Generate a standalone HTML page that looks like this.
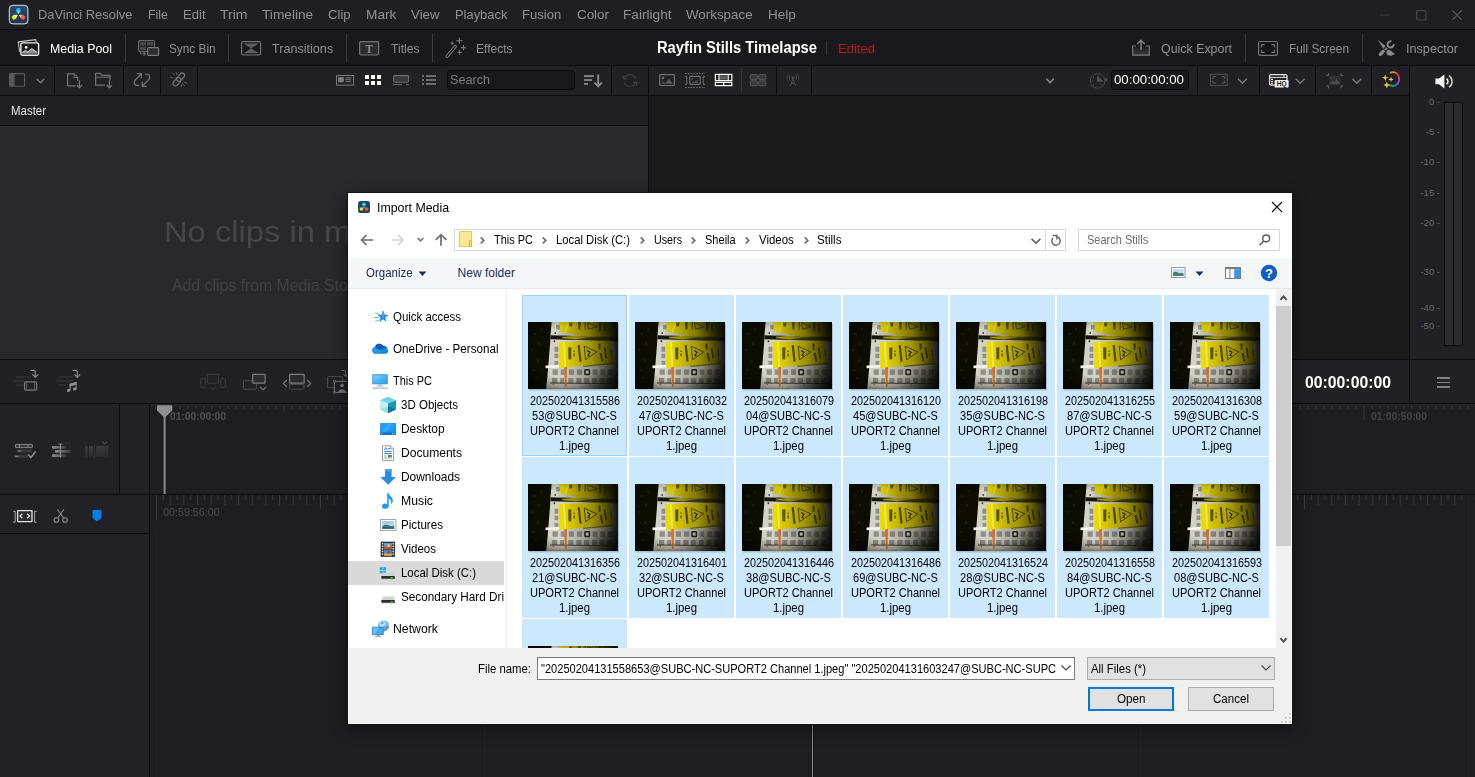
<!DOCTYPE html>
<html><head><meta charset="utf-8"><title>DaVinci Resolve</title>
<style>
html,body{margin:0;padding:0;background:#1e1e22;}
body{width:1475px;height:777px;position:relative;overflow:hidden;font-family:"Liberation Sans",sans-serif;}
div,span,svg{position:absolute;display:block;}
span{white-space:nowrap;}
</style></head><body>
<div style="left:0px;top:0px;width:1475px;height:29px;background:#1f1f23;"></div>
<div style="left:0px;top:29px;width:1475px;height:1px;background:#0d0d0f;"></div>
<div style="left:0px;top:30px;width:1475px;height:35px;background:#19191d;"></div>
<div style="left:0px;top:65px;width:1475px;height:1px;background:#0d0d0f;"></div>
<div style="left:0px;top:66px;width:1475px;height:29px;background:#212125;"></div>
<div style="left:0px;top:95px;width:1409px;height:1px;background:#0d0d0f;"></div>
<div style="left:0px;top:96px;width:648px;height:29px;background:#212125;"></div>
<div style="left:0px;top:125px;width:648px;height:1px;background:#0d0d0f;"></div>
<div style="left:0px;top:126px;width:648px;height:233px;background:#28282d;"></div>
<div style="left:648px;top:66px;width:1px;height:294px;background:#0d0d0f;"></div>
<div style="left:649px;top:96px;width:760px;height:263px;background:#1b1b1c;"></div>
<div style="left:1409px;top:66px;width:1px;height:338px;background:#0d0d0f;"></div>
<div style="left:1410px;top:66px;width:65px;height:293px;background:#212125;"></div>
<div style="left:0px;top:359px;width:1475px;height:1px;background:#0d0d0f;"></div>
<div style="left:0px;top:360px;width:1475px;height:43px;background:#212125;"></div>
<div style="left:0px;top:403px;width:1475px;height:1px;background:#0d0d0f;"></div>
<div style="left:0px;top:404px;width:1475px;height:90px;background:#1e1e22;"></div>
<div style="left:0px;top:404px;width:149px;height:90px;background:#222226;"></div>
<div style="left:119px;top:404px;width:1px;height:90px;background:#0d0d0f;"></div>
<div style="left:149px;top:404px;width:1px;height:373px;background:#0d0d0f;"></div>
<div style="left:0px;top:494px;width:1475px;height:1px;background:#0d0d0f;"></div>
<div style="left:0px;top:495px;width:149px;height:282px;background:#222226;"></div>
<div style="left:150px;top:495px;width:1325px;height:282px;background:#1e1e22;"></div>
<div style="left:0px;top:533px;width:149px;height:1px;background:#0d0d0f;"></div>
<div style="left:54px;top:66px;width:1px;height:29px;background:#0d0d0f;"></div>
<div style="left:123px;top:66px;width:1px;height:29px;background:#0d0d0f;"></div>
<div style="left:160px;top:66px;width:1px;height:29px;background:#0d0d0f;"></div>
<div style="left:197px;top:66px;width:1px;height:29px;background:#0d0d0f;"></div>
<div style="left:611px;top:66px;width:1px;height:29px;background:#0d0d0f;"></div>
<div style="left:776px;top:66px;width:1px;height:29px;background:#0d0d0f;"></div>
<div style="left:811px;top:66px;width:1px;height:29px;background:#0d0d0f;"></div>
<div style="left:1197px;top:66px;width:1px;height:29px;background:#0d0d0f;"></div>
<div style="left:1259px;top:66px;width:1px;height:29px;background:#0d0d0f;"></div>
<div style="left:1315px;top:66px;width:1px;height:29px;background:#0d0d0f;"></div>
<div style="left:1371px;top:66px;width:1px;height:29px;background:#0d0d0f;"></div>
<div style="left:741px;top:69px;width:1px;height:23px;background:#3a3a3e;"></div>
<span id="t1" style="left:38.4px;top:6.7px;font:400 13px/16px 'Liberation Sans',sans-serif;color:#929292;transform:scaleX(0.9922);transform-origin:0 0;">DaVinci Resolve</span>
<span id="t2" style="left:147.6px;top:6.7px;font:400 13px/16px 'Liberation Sans',sans-serif;color:#929292;transform:scaleX(0.9545);transform-origin:0 0;">File</span>
<span id="t3" style="left:183px;top:6.7px;font:400 13px/16px 'Liberation Sans',sans-serif;color:#929292;transform:scaleX(1.0086);transform-origin:0 0;">Edit</span>
<span id="t4" style="left:220px;top:6.7px;font:400 13px/16px 'Liberation Sans',sans-serif;color:#929292;transform:scaleX(1.0817);transform-origin:0 0;">Trim</span>
<span id="t5" style="left:262.4px;top:6.7px;font:400 13px/16px 'Liberation Sans',sans-serif;color:#929292;transform:scaleX(1.0523);transform-origin:0 0;">Timeline</span>
<span id="t6" style="left:328px;top:6.7px;font:400 13px/16px 'Liberation Sans',sans-serif;color:#929292;transform:scaleX(1.0086);transform-origin:0 0;">Clip</span>
<span id="t7" style="left:366px;top:6.7px;font:400 13px/16px 'Liberation Sans',sans-serif;color:#929292;transform:scaleX(1.0522);transform-origin:0 0;">Mark</span>
<span id="t8" style="left:411px;top:6.7px;font:400 13px/16px 'Liberation Sans',sans-serif;color:#929292;transform:scaleX(1.0231);transform-origin:0 0;">View</span>
<span id="t9" style="left:455px;top:6.7px;font:400 13px/16px 'Liberation Sans',sans-serif;color:#929292;transform:scaleX(0.9934);transform-origin:0 0;">Playback</span>
<span id="t10" style="left:522.4px;top:6.7px;font:400 13px/16px 'Liberation Sans',sans-serif;color:#929292;transform:scaleX(1.0043);transform-origin:0 0;">Fusion</span>
<span id="t11" style="left:576.6px;top:6.7px;font:400 13px/16px 'Liberation Sans',sans-serif;color:#929292;transform:scaleX(1.0297);transform-origin:0 0;">Color</span>
<span id="t12" style="left:623.4px;top:6.7px;font:400 13px/16px 'Liberation Sans',sans-serif;color:#929292;transform:scaleX(1.0508);transform-origin:0 0;">Fairlight</span>
<span id="t13" style="left:686px;top:6.7px;font:400 13px/16px 'Liberation Sans',sans-serif;color:#929292;transform:scaleX(1.0278);transform-origin:0 0;">Workspace</span>
<span id="t14" style="left:767.6px;top:6.7px;font:400 13px/16px 'Liberation Sans',sans-serif;color:#929292;transform:scaleX(1.0393);transform-origin:0 0;">Help</span>
<span id="t15" style="left:50.4px;top:40.8px;font:400 13px/16px 'Liberation Sans',sans-serif;color:#ffffff;transform:scaleX(0.9532);transform-origin:0 0;">Media Pool</span>
<span id="t16" style="left:169px;top:40.8px;font:400 13px/16px 'Liberation Sans',sans-serif;color:#929292;transform:scaleX(0.9082);transform-origin:0 0;">Sync Bin</span>
<span id="t17" style="left:272.4px;top:40.8px;font:400 13px/16px 'Liberation Sans',sans-serif;color:#929292;transform:scaleX(0.9697);transform-origin:0 0;">Transitions</span>
<span id="t18" style="left:390.6px;top:40.8px;font:400 13px/16px 'Liberation Sans',sans-serif;color:#929292;transform:scaleX(0.9353);transform-origin:0 0;">Titles</span>
<span id="t19" style="left:476.4px;top:40.8px;font:400 13px/16px 'Liberation Sans',sans-serif;color:#929292;transform:scaleX(0.9262);transform-origin:0 0;">Effects</span>
<span id="t20" style="left:656.6px;top:37.96px;font:700 16px/19px 'Liberation Sans',sans-serif;color:#ffffff;transform:scaleX(0.9195);transform-origin:0 0;">Rayfin Stills Timelapse</span>
<div style="left:826px;top:41px;width:1px;height:14px;background:#3a3a3e;"></div>
<span id="t21" style="left:838px;top:40.8px;font:400 13px/16px 'Liberation Sans',sans-serif;color:#b11a1a;transform:scaleX(1.0034);transform-origin:0 0;">Edited</span>
<span id="t22" style="left:1161.4px;top:40.8px;font:400 13px/16px 'Liberation Sans',sans-serif;color:#929292;transform:scaleX(0.9540);transform-origin:0 0;">Quick Export</span>
<span id="t23" style="left:1289.4px;top:40.8px;font:400 13px/16px 'Liberation Sans',sans-serif;color:#929292;transform:scaleX(0.9125);transform-origin:0 0;">Full Screen</span>
<span id="t24" style="left:1406.4px;top:40.8px;font:400 13px/16px 'Liberation Sans',sans-serif;color:#929292;transform:scaleX(0.9722);transform-origin:0 0;">Inspector</span>
<div style="left:125px;top:34px;width:1px;height:28px;background:#3a3a3e;"></div>
<div style="left:228px;top:34px;width:1px;height:28px;background:#3a3a3e;"></div>
<div style="left:346px;top:34px;width:1px;height:28px;background:#3a3a3e;"></div>
<div style="left:432px;top:34px;width:1px;height:28px;background:#3a3a3e;"></div>
<div style="left:1245px;top:34px;width:1px;height:28px;background:#3a3a3e;"></div>
<div style="left:1362px;top:34px;width:1px;height:28px;background:#3a3a3e;"></div>
<div style="left:447px;top:70px;width:126px;height:18px;background:#18181b;border:1px solid #0b0b0d;border-radius:3px"></div>
<span id="t25" style="left:450.4px;top:72.3px;font:400 13px/16px 'Liberation Sans',sans-serif;color:#7c7c7c;transform:scaleX(0.9708);transform-origin:0 0;">Search</span>
<div style="left:1111px;top:70px;width:76px;height:18px;background:#18181b;border:1px solid #0b0b0d;border-radius:3px"></div>
<span id="t26" style="left:1114.4px;top:72.3px;font:400 13px/16px 'Liberation Sans',sans-serif;color:#ffffff;transform:scaleX(1.0191);transform-origin:0 0;">00:00:00:00</span>
<span id="t27" style="left:11.4px;top:103.84px;font:400 12px/14px 'Liberation Sans',sans-serif;color:#e6e6e6;transform:scaleX(0.9540);transform-origin:0 0;">Master</span>
<span id="t28" style="left:164px;top:213.6px;font:400 30px/36px 'Liberation Sans',sans-serif;color:#45454b;transform:scaleX(1.0903);transform-origin:0 0;">No clips in media pool</span>
<span id="t29" style="left:172px;top:275.66px;font:400 16px/19px 'Liberation Sans',sans-serif;color:#404046;transform:scaleX(0.9879);transform-origin:0 0;">Add clips from Media Storage to get started</span>
<span style="left:1400px;top:96px;width:40px;text-align:right;font:9.5px/12px 'Liberation Sans',sans-serif;color:#66666c">0 -</span>
<span style="left:1400px;top:126px;width:40px;text-align:right;font:9.5px/12px 'Liberation Sans',sans-serif;color:#66666c">-5 -</span>
<span style="left:1400px;top:156px;width:40px;text-align:right;font:9.5px/12px 'Liberation Sans',sans-serif;color:#66666c">-10 -</span>
<span style="left:1400px;top:187px;width:40px;text-align:right;font:9.5px/12px 'Liberation Sans',sans-serif;color:#66666c">-15 -</span>
<span style="left:1400px;top:217px;width:40px;text-align:right;font:9.5px/12px 'Liberation Sans',sans-serif;color:#66666c">-20 -</span>
<span style="left:1400px;top:266px;width:40px;text-align:right;font:9.5px/12px 'Liberation Sans',sans-serif;color:#66666c">-30 -</span>
<span style="left:1400px;top:302px;width:40px;text-align:right;font:9.5px/12px 'Liberation Sans',sans-serif;color:#66666c">-40 -</span>
<span style="left:1400px;top:320px;width:40px;text-align:right;font:9.5px/12px 'Liberation Sans',sans-serif;color:#66666c">-50 -</span>
<div style="left:1444px;top:102px;width:8px;height:242px;background:#2a2a2f;border:1px solid #0e0e10"></div>
<div style="left:1453px;top:102px;width:8px;height:242px;background:#2a2a2f;border:1px solid #0e0e10"></div>
<span id="t30" style="left:1305px;top:372.71px;font:700 17px/20px 'Liberation Sans',sans-serif;color:#ffffff;transform:scaleX(0.9285);transform-origin:0 0;">00:00:00:00</span>
<div style="left:1409px;top:360px;width:1px;height:43px;background:#0d0d0f;"></div>
<div style="left:1437px;top:377px;width:13px;height:1.5px;background:#808080;"></div>
<div style="left:1437px;top:381.5px;width:13px;height:1.5px;background:#808080;"></div>
<div style="left:1437px;top:386px;width:13px;height:1.5px;background:#808080;"></div>
<svg style="left:0;top:404px" width="1475" height="17" fill="#37373c"><rect x="151.5" y="0" width="1" height="2.5"/><rect x="155.5" y="0" width="1" height="5"/><rect x="159.5" y="0" width="1" height="2.5"/><rect x="163.5" y="0" width="1" height="16"/><rect x="167.5" y="0" width="1" height="2.5"/><rect x="171.5" y="0" width="1" height="5"/><rect x="175.5" y="0" width="1" height="2.5"/><rect x="179.5" y="0" width="1" height="5"/><rect x="183.5" y="0" width="1" height="2.5"/><rect x="187.5" y="0" width="1" height="5"/><rect x="191.5" y="0" width="1" height="2.5"/><rect x="195.5" y="0" width="1" height="5"/><rect x="199.5" y="0" width="1" height="2.5"/><rect x="203.5" y="0" width="1" height="5"/><rect x="207.5" y="0" width="1" height="2.5"/><rect x="211.5" y="0" width="1" height="5"/><rect x="215.5" y="0" width="1" height="2.5"/><rect x="219.5" y="0" width="1" height="5"/><rect x="223.5" y="0" width="1" height="2.5"/><rect x="227.5" y="0" width="1" height="5"/><rect x="231.5" y="0" width="1" height="2.5"/><rect x="235.5" y="0" width="1" height="5"/><rect x="239.5" y="0" width="1" height="2.5"/><rect x="243.5" y="0" width="1" height="5"/><rect x="247.5" y="0" width="1" height="2.5"/><rect x="251.5" y="0" width="1" height="5"/><rect x="255.5" y="0" width="1" height="2.5"/><rect x="259.5" y="0" width="1" height="5"/><rect x="263.5" y="0" width="1" height="2.5"/><rect x="267.5" y="0" width="1" height="5"/><rect x="271.5" y="0" width="1" height="2.5"/><rect x="275.5" y="0" width="1" height="5"/><rect x="279.5" y="0" width="1" height="2.5"/><rect x="283.5" y="0" width="1" height="8.5"/><rect x="287.5" y="0" width="1" height="2.5"/><rect x="291.5" y="0" width="1" height="5"/><rect x="295.5" y="0" width="1" height="2.5"/><rect x="299.5" y="0" width="1" height="5"/><rect x="303.5" y="0" width="1" height="2.5"/><rect x="307.5" y="0" width="1" height="5"/><rect x="311.5" y="0" width="1" height="2.5"/><rect x="315.5" y="0" width="1" height="5"/><rect x="319.5" y="0" width="1" height="2.5"/><rect x="323.5" y="0" width="1" height="5"/><rect x="327.5" y="0" width="1" height="2.5"/><rect x="331.5" y="0" width="1" height="5"/><rect x="335.5" y="0" width="1" height="2.5"/><rect x="339.5" y="0" width="1" height="5"/><rect x="343.5" y="0" width="1" height="2.5"/><rect x="347.5" y="0" width="1" height="5"/><rect x="351.5" y="0" width="1" height="2.5"/><rect x="355.5" y="0" width="1" height="5"/><rect x="359.5" y="0" width="1" height="2.5"/><rect x="363.5" y="0" width="1" height="5"/><rect x="367.5" y="0" width="1" height="2.5"/><rect x="371.5" y="0" width="1" height="5"/><rect x="375.5" y="0" width="1" height="2.5"/><rect x="379.5" y="0" width="1" height="5"/><rect x="383.5" y="0" width="1" height="2.5"/><rect x="387.5" y="0" width="1" height="5"/><rect x="391.5" y="0" width="1" height="2.5"/><rect x="395.5" y="0" width="1" height="5"/><rect x="399.5" y="0" width="1" height="2.5"/><rect x="403.5" y="0" width="1" height="8.5"/><rect x="407.5" y="0" width="1" height="2.5"/><rect x="411.5" y="0" width="1" height="5"/><rect x="415.5" y="0" width="1" height="2.5"/><rect x="419.5" y="0" width="1" height="5"/><rect x="423.5" y="0" width="1" height="2.5"/><rect x="427.5" y="0" width="1" height="5"/><rect x="431.5" y="0" width="1" height="2.5"/><rect x="435.5" y="0" width="1" height="5"/><rect x="439.5" y="0" width="1" height="2.5"/><rect x="443.5" y="0" width="1" height="5"/><rect x="447.5" y="0" width="1" height="2.5"/><rect x="451.5" y="0" width="1" height="5"/><rect x="455.5" y="0" width="1" height="2.5"/><rect x="459.5" y="0" width="1" height="5"/><rect x="463.5" y="0" width="1" height="2.5"/><rect x="467.5" y="0" width="1" height="5"/><rect x="471.5" y="0" width="1" height="2.5"/><rect x="475.5" y="0" width="1" height="5"/><rect x="479.5" y="0" width="1" height="2.5"/><rect x="483.5" y="0" width="1" height="5"/><rect x="487.5" y="0" width="1" height="2.5"/><rect x="491.5" y="0" width="1" height="5"/><rect x="495.5" y="0" width="1" height="2.5"/><rect x="499.5" y="0" width="1" height="5"/><rect x="503.5" y="0" width="1" height="2.5"/><rect x="507.5" y="0" width="1" height="5"/><rect x="511.5" y="0" width="1" height="2.5"/><rect x="515.5" y="0" width="1" height="5"/><rect x="519.5" y="0" width="1" height="2.5"/><rect x="523.5" y="0" width="1" height="8.5"/><rect x="527.5" y="0" width="1" height="2.5"/><rect x="531.5" y="0" width="1" height="5"/><rect x="535.5" y="0" width="1" height="2.5"/><rect x="539.5" y="0" width="1" height="5"/><rect x="543.5" y="0" width="1" height="2.5"/><rect x="547.5" y="0" width="1" height="5"/><rect x="551.5" y="0" width="1" height="2.5"/><rect x="555.5" y="0" width="1" height="5"/><rect x="559.5" y="0" width="1" height="2.5"/><rect x="563.5" y="0" width="1" height="5"/><rect x="567.5" y="0" width="1" height="2.5"/><rect x="571.5" y="0" width="1" height="5"/><rect x="575.5" y="0" width="1" height="2.5"/><rect x="579.5" y="0" width="1" height="5"/><rect x="583.5" y="0" width="1" height="2.5"/><rect x="587.5" y="0" width="1" height="5"/><rect x="591.5" y="0" width="1" height="2.5"/><rect x="595.5" y="0" width="1" height="5"/><rect x="599.5" y="0" width="1" height="2.5"/><rect x="603.5" y="0" width="1" height="5"/><rect x="607.5" y="0" width="1" height="2.5"/><rect x="611.5" y="0" width="1" height="5"/><rect x="615.5" y="0" width="1" height="2.5"/><rect x="619.5" y="0" width="1" height="5"/><rect x="623.5" y="0" width="1" height="2.5"/><rect x="627.5" y="0" width="1" height="5"/><rect x="631.5" y="0" width="1" height="2.5"/><rect x="635.5" y="0" width="1" height="5"/><rect x="639.5" y="0" width="1" height="2.5"/><rect x="643.5" y="0" width="1" height="8.5"/><rect x="647.5" y="0" width="1" height="2.5"/><rect x="651.5" y="0" width="1" height="5"/><rect x="655.5" y="0" width="1" height="2.5"/><rect x="659.5" y="0" width="1" height="5"/><rect x="663.5" y="0" width="1" height="2.5"/><rect x="667.5" y="0" width="1" height="5"/><rect x="671.5" y="0" width="1" height="2.5"/><rect x="675.5" y="0" width="1" height="5"/><rect x="679.5" y="0" width="1" height="2.5"/><rect x="683.5" y="0" width="1" height="5"/><rect x="687.5" y="0" width="1" height="2.5"/><rect x="691.5" y="0" width="1" height="5"/><rect x="695.5" y="0" width="1" height="2.5"/><rect x="699.5" y="0" width="1" height="5"/><rect x="703.5" y="0" width="1" height="2.5"/><rect x="707.5" y="0" width="1" height="5"/><rect x="711.5" y="0" width="1" height="2.5"/><rect x="715.5" y="0" width="1" height="5"/><rect x="719.5" y="0" width="1" height="2.5"/><rect x="723.5" y="0" width="1" height="5"/><rect x="727.5" y="0" width="1" height="2.5"/><rect x="731.5" y="0" width="1" height="5"/><rect x="735.5" y="0" width="1" height="2.5"/><rect x="739.5" y="0" width="1" height="5"/><rect x="743.5" y="0" width="1" height="2.5"/><rect x="747.5" y="0" width="1" height="5"/><rect x="751.5" y="0" width="1" height="2.5"/><rect x="755.5" y="0" width="1" height="5"/><rect x="759.5" y="0" width="1" height="2.5"/><rect x="763.5" y="0" width="1" height="8.5"/><rect x="767.5" y="0" width="1" height="2.5"/><rect x="771.5" y="0" width="1" height="5"/><rect x="775.5" y="0" width="1" height="2.5"/><rect x="779.5" y="0" width="1" height="5"/><rect x="783.5" y="0" width="1" height="2.5"/><rect x="787.5" y="0" width="1" height="5"/><rect x="791.5" y="0" width="1" height="2.5"/><rect x="795.5" y="0" width="1" height="5"/><rect x="799.5" y="0" width="1" height="2.5"/><rect x="803.5" y="0" width="1" height="5"/><rect x="807.5" y="0" width="1" height="2.5"/><rect x="811.5" y="0" width="1" height="5"/><rect x="815.5" y="0" width="1" height="2.5"/><rect x="819.5" y="0" width="1" height="5"/><rect x="823.5" y="0" width="1" height="2.5"/><rect x="827.5" y="0" width="1" height="5"/><rect x="831.5" y="0" width="1" height="2.5"/><rect x="835.5" y="0" width="1" height="5"/><rect x="839.5" y="0" width="1" height="2.5"/><rect x="843.5" y="0" width="1" height="5"/><rect x="847.5" y="0" width="1" height="2.5"/><rect x="851.5" y="0" width="1" height="5"/><rect x="855.5" y="0" width="1" height="2.5"/><rect x="859.5" y="0" width="1" height="5"/><rect x="863.5" y="0" width="1" height="2.5"/><rect x="867.5" y="0" width="1" height="5"/><rect x="871.5" y="0" width="1" height="2.5"/><rect x="875.5" y="0" width="1" height="5"/><rect x="879.5" y="0" width="1" height="2.5"/><rect x="883.5" y="0" width="1" height="8.5"/><rect x="887.5" y="0" width="1" height="2.5"/><rect x="891.5" y="0" width="1" height="5"/><rect x="895.5" y="0" width="1" height="2.5"/><rect x="899.5" y="0" width="1" height="5"/><rect x="903.5" y="0" width="1" height="2.5"/><rect x="907.5" y="0" width="1" height="5"/><rect x="911.5" y="0" width="1" height="2.5"/><rect x="915.5" y="0" width="1" height="5"/><rect x="919.5" y="0" width="1" height="2.5"/><rect x="923.5" y="0" width="1" height="5"/><rect x="927.5" y="0" width="1" height="2.5"/><rect x="931.5" y="0" width="1" height="5"/><rect x="935.5" y="0" width="1" height="2.5"/><rect x="939.5" y="0" width="1" height="5"/><rect x="943.5" y="0" width="1" height="2.5"/><rect x="947.5" y="0" width="1" height="5"/><rect x="951.5" y="0" width="1" height="2.5"/><rect x="955.5" y="0" width="1" height="5"/><rect x="959.5" y="0" width="1" height="2.5"/><rect x="963.5" y="0" width="1" height="5"/><rect x="967.5" y="0" width="1" height="2.5"/><rect x="971.5" y="0" width="1" height="5"/><rect x="975.5" y="0" width="1" height="2.5"/><rect x="979.5" y="0" width="1" height="5"/><rect x="983.5" y="0" width="1" height="2.5"/><rect x="987.5" y="0" width="1" height="5"/><rect x="991.5" y="0" width="1" height="2.5"/><rect x="995.5" y="0" width="1" height="5"/><rect x="999.5" y="0" width="1" height="2.5"/><rect x="1003.5" y="0" width="1" height="8.5"/><rect x="1007.5" y="0" width="1" height="2.5"/><rect x="1011.5" y="0" width="1" height="5"/><rect x="1015.5" y="0" width="1" height="2.5"/><rect x="1019.5" y="0" width="1" height="5"/><rect x="1023.5" y="0" width="1" height="2.5"/><rect x="1027.5" y="0" width="1" height="5"/><rect x="1031.5" y="0" width="1" height="2.5"/><rect x="1035.5" y="0" width="1" height="5"/><rect x="1039.5" y="0" width="1" height="2.5"/><rect x="1043.5" y="0" width="1" height="5"/><rect x="1047.5" y="0" width="1" height="2.5"/><rect x="1051.5" y="0" width="1" height="5"/><rect x="1055.5" y="0" width="1" height="2.5"/><rect x="1059.5" y="0" width="1" height="5"/><rect x="1063.5" y="0" width="1" height="2.5"/><rect x="1067.5" y="0" width="1" height="5"/><rect x="1071.5" y="0" width="1" height="2.5"/><rect x="1075.5" y="0" width="1" height="5"/><rect x="1079.5" y="0" width="1" height="2.5"/><rect x="1083.5" y="0" width="1" height="5"/><rect x="1087.5" y="0" width="1" height="2.5"/><rect x="1091.5" y="0" width="1" height="5"/><rect x="1095.5" y="0" width="1" height="2.5"/><rect x="1099.5" y="0" width="1" height="5"/><rect x="1103.5" y="0" width="1" height="2.5"/><rect x="1107.5" y="0" width="1" height="5"/><rect x="1111.5" y="0" width="1" height="2.5"/><rect x="1115.5" y="0" width="1" height="5"/><rect x="1119.5" y="0" width="1" height="2.5"/><rect x="1123.5" y="0" width="1" height="8.5"/><rect x="1127.5" y="0" width="1" height="2.5"/><rect x="1131.5" y="0" width="1" height="5"/><rect x="1135.5" y="0" width="1" height="2.5"/><rect x="1139.5" y="0" width="1" height="5"/><rect x="1143.5" y="0" width="1" height="2.5"/><rect x="1147.5" y="0" width="1" height="5"/><rect x="1151.5" y="0" width="1" height="2.5"/><rect x="1155.5" y="0" width="1" height="5"/><rect x="1159.5" y="0" width="1" height="2.5"/><rect x="1163.5" y="0" width="1" height="5"/><rect x="1167.5" y="0" width="1" height="2.5"/><rect x="1171.5" y="0" width="1" height="5"/><rect x="1175.5" y="0" width="1" height="2.5"/><rect x="1179.5" y="0" width="1" height="5"/><rect x="1183.5" y="0" width="1" height="2.5"/><rect x="1187.5" y="0" width="1" height="5"/><rect x="1191.5" y="0" width="1" height="2.5"/><rect x="1195.5" y="0" width="1" height="5"/><rect x="1199.5" y="0" width="1" height="2.5"/><rect x="1203.5" y="0" width="1" height="5"/><rect x="1207.5" y="0" width="1" height="2.5"/><rect x="1211.5" y="0" width="1" height="5"/><rect x="1215.5" y="0" width="1" height="2.5"/><rect x="1219.5" y="0" width="1" height="5"/><rect x="1223.5" y="0" width="1" height="2.5"/><rect x="1227.5" y="0" width="1" height="5"/><rect x="1231.5" y="0" width="1" height="2.5"/><rect x="1235.5" y="0" width="1" height="5"/><rect x="1239.5" y="0" width="1" height="2.5"/><rect x="1243.5" y="0" width="1" height="8.5"/><rect x="1247.5" y="0" width="1" height="2.5"/><rect x="1251.5" y="0" width="1" height="5"/><rect x="1255.5" y="0" width="1" height="2.5"/><rect x="1259.5" y="0" width="1" height="5"/><rect x="1263.5" y="0" width="1" height="2.5"/><rect x="1267.5" y="0" width="1" height="5"/><rect x="1271.5" y="0" width="1" height="2.5"/><rect x="1275.5" y="0" width="1" height="5"/><rect x="1279.5" y="0" width="1" height="2.5"/><rect x="1283.5" y="0" width="1" height="5"/><rect x="1287.5" y="0" width="1" height="2.5"/><rect x="1291.5" y="0" width="1" height="5"/><rect x="1295.5" y="0" width="1" height="2.5"/><rect x="1299.5" y="0" width="1" height="5"/><rect x="1303.5" y="0" width="1" height="2.5"/><rect x="1307.5" y="0" width="1" height="5"/><rect x="1311.5" y="0" width="1" height="2.5"/><rect x="1315.5" y="0" width="1" height="5"/><rect x="1319.5" y="0" width="1" height="2.5"/><rect x="1323.5" y="0" width="1" height="5"/><rect x="1327.5" y="0" width="1" height="2.5"/><rect x="1331.5" y="0" width="1" height="5"/><rect x="1335.5" y="0" width="1" height="2.5"/><rect x="1339.5" y="0" width="1" height="5"/><rect x="1343.5" y="0" width="1" height="2.5"/><rect x="1347.5" y="0" width="1" height="5"/><rect x="1351.5" y="0" width="1" height="2.5"/><rect x="1355.5" y="0" width="1" height="5"/><rect x="1359.5" y="0" width="1" height="2.5"/><rect x="1363.5" y="0" width="1" height="16"/><rect x="1367.5" y="0" width="1" height="2.5"/><rect x="1371.5" y="0" width="1" height="5"/><rect x="1375.5" y="0" width="1" height="2.5"/><rect x="1379.5" y="0" width="1" height="5"/><rect x="1383.5" y="0" width="1" height="2.5"/><rect x="1387.5" y="0" width="1" height="5"/><rect x="1391.5" y="0" width="1" height="2.5"/><rect x="1395.5" y="0" width="1" height="5"/><rect x="1399.5" y="0" width="1" height="2.5"/><rect x="1403.5" y="0" width="1" height="5"/><rect x="1407.5" y="0" width="1" height="2.5"/><rect x="1411.5" y="0" width="1" height="5"/><rect x="1415.5" y="0" width="1" height="2.5"/><rect x="1419.5" y="0" width="1" height="5"/><rect x="1423.5" y="0" width="1" height="2.5"/><rect x="1427.5" y="0" width="1" height="5"/><rect x="1431.5" y="0" width="1" height="2.5"/><rect x="1435.5" y="0" width="1" height="5"/><rect x="1439.5" y="0" width="1" height="2.5"/><rect x="1443.5" y="0" width="1" height="5"/><rect x="1447.5" y="0" width="1" height="2.5"/><rect x="1451.5" y="0" width="1" height="5"/><rect x="1455.5" y="0" width="1" height="2.5"/><rect x="1459.5" y="0" width="1" height="5"/><rect x="1463.5" y="0" width="1" height="2.5"/><rect x="1467.5" y="0" width="1" height="5"/><rect x="1471.5" y="0" width="1" height="2.5"/></svg>
<svg style="left:0;top:495px" width="1475" height="26" fill="#38383d"><rect x="156.00" y="0" width="1" height="25"/><rect x="162.83" y="0" width="1" height="5"/><rect x="169.67" y="0" width="1" height="10"/><rect x="176.50" y="0" width="1" height="5"/><rect x="183.33" y="0" width="1" height="10"/><rect x="190.17" y="0" width="1" height="5"/><rect x="197.00" y="0" width="1" height="10"/><rect x="203.83" y="0" width="1" height="5"/><rect x="210.67" y="0" width="1" height="10"/><rect x="217.50" y="0" width="1" height="5"/><rect x="224.33" y="0" width="1" height="10"/><rect x="231.17" y="0" width="1" height="5"/><rect x="238.00" y="0" width="1" height="10"/><rect x="244.83" y="0" width="1" height="5"/><rect x="251.67" y="0" width="1" height="10"/><rect x="258.50" y="0" width="1" height="5"/><rect x="265.33" y="0" width="1" height="10"/><rect x="272.17" y="0" width="1" height="5"/><rect x="279.00" y="0" width="1" height="10"/><rect x="285.83" y="0" width="1" height="5"/><rect x="292.67" y="0" width="1" height="10"/><rect x="299.50" y="0" width="1" height="5"/><rect x="306.33" y="0" width="1" height="10"/><rect x="313.17" y="0" width="1" height="5"/><rect x="320.00" y="0" width="1" height="14"/><rect x="326.83" y="0" width="1" height="5"/><rect x="333.67" y="0" width="1" height="10"/><rect x="340.50" y="0" width="1" height="5"/><rect x="347.33" y="0" width="1" height="10"/><rect x="354.17" y="0" width="1" height="5"/><rect x="361.00" y="0" width="1" height="10"/><rect x="367.83" y="0" width="1" height="5"/><rect x="374.67" y="0" width="1" height="10"/><rect x="381.50" y="0" width="1" height="5"/><rect x="388.33" y="0" width="1" height="10"/><rect x="395.17" y="0" width="1" height="5"/><rect x="402.00" y="0" width="1" height="10"/><rect x="408.83" y="0" width="1" height="5"/><rect x="415.67" y="0" width="1" height="10"/><rect x="422.50" y="0" width="1" height="5"/><rect x="429.33" y="0" width="1" height="10"/><rect x="436.17" y="0" width="1" height="5"/><rect x="443.00" y="0" width="1" height="10"/><rect x="449.83" y="0" width="1" height="5"/><rect x="456.67" y="0" width="1" height="10"/><rect x="463.50" y="0" width="1" height="5"/><rect x="470.33" y="0" width="1" height="10"/><rect x="477.17" y="0" width="1" height="5"/><rect x="484.00" y="0" width="1" height="25"/><rect x="490.83" y="0" width="1" height="5"/><rect x="497.67" y="0" width="1" height="10"/><rect x="504.50" y="0" width="1" height="5"/><rect x="511.33" y="0" width="1" height="10"/><rect x="518.17" y="0" width="1" height="5"/><rect x="525.00" y="0" width="1" height="10"/><rect x="531.83" y="0" width="1" height="5"/><rect x="538.67" y="0" width="1" height="10"/><rect x="545.50" y="0" width="1" height="5"/><rect x="552.33" y="0" width="1" height="10"/><rect x="559.17" y="0" width="1" height="5"/><rect x="566.00" y="0" width="1" height="10"/><rect x="572.83" y="0" width="1" height="5"/><rect x="579.67" y="0" width="1" height="10"/><rect x="586.50" y="0" width="1" height="5"/><rect x="593.33" y="0" width="1" height="10"/><rect x="600.17" y="0" width="1" height="5"/><rect x="607.00" y="0" width="1" height="10"/><rect x="613.83" y="0" width="1" height="5"/><rect x="620.67" y="0" width="1" height="10"/><rect x="627.50" y="0" width="1" height="5"/><rect x="634.33" y="0" width="1" height="10"/><rect x="641.17" y="0" width="1" height="5"/><rect x="648.00" y="0" width="1" height="14"/><rect x="654.83" y="0" width="1" height="5"/><rect x="661.67" y="0" width="1" height="10"/><rect x="668.50" y="0" width="1" height="5"/><rect x="675.33" y="0" width="1" height="10"/><rect x="682.17" y="0" width="1" height="5"/><rect x="689.00" y="0" width="1" height="10"/><rect x="695.83" y="0" width="1" height="5"/><rect x="702.67" y="0" width="1" height="10"/><rect x="709.50" y="0" width="1" height="5"/><rect x="716.33" y="0" width="1" height="10"/><rect x="723.17" y="0" width="1" height="5"/><rect x="730.00" y="0" width="1" height="10"/><rect x="736.83" y="0" width="1" height="5"/><rect x="743.67" y="0" width="1" height="10"/><rect x="750.50" y="0" width="1" height="5"/><rect x="757.33" y="0" width="1" height="10"/><rect x="764.17" y="0" width="1" height="5"/><rect x="771.00" y="0" width="1" height="10"/><rect x="777.83" y="0" width="1" height="5"/><rect x="784.67" y="0" width="1" height="10"/><rect x="791.50" y="0" width="1" height="5"/><rect x="798.33" y="0" width="1" height="10"/><rect x="805.17" y="0" width="1" height="5"/><rect x="812.00" y="0" width="1" height="25"/><rect x="818.83" y="0" width="1" height="5"/><rect x="825.67" y="0" width="1" height="10"/><rect x="832.50" y="0" width="1" height="5"/><rect x="839.33" y="0" width="1" height="10"/><rect x="846.17" y="0" width="1" height="5"/><rect x="853.00" y="0" width="1" height="10"/><rect x="859.83" y="0" width="1" height="5"/><rect x="866.67" y="0" width="1" height="10"/><rect x="873.50" y="0" width="1" height="5"/><rect x="880.33" y="0" width="1" height="10"/><rect x="887.17" y="0" width="1" height="5"/><rect x="894.00" y="0" width="1" height="10"/><rect x="900.83" y="0" width="1" height="5"/><rect x="907.67" y="0" width="1" height="10"/><rect x="914.50" y="0" width="1" height="5"/><rect x="921.33" y="0" width="1" height="10"/><rect x="928.17" y="0" width="1" height="5"/><rect x="935.00" y="0" width="1" height="10"/><rect x="941.83" y="0" width="1" height="5"/><rect x="948.67" y="0" width="1" height="10"/><rect x="955.50" y="0" width="1" height="5"/><rect x="962.33" y="0" width="1" height="10"/><rect x="969.17" y="0" width="1" height="5"/><rect x="976.00" y="0" width="1" height="14"/><rect x="982.83" y="0" width="1" height="5"/><rect x="989.67" y="0" width="1" height="10"/><rect x="996.50" y="0" width="1" height="5"/><rect x="1003.33" y="0" width="1" height="10"/><rect x="1010.17" y="0" width="1" height="5"/><rect x="1017.00" y="0" width="1" height="10"/><rect x="1023.83" y="0" width="1" height="5"/><rect x="1030.67" y="0" width="1" height="10"/><rect x="1037.50" y="0" width="1" height="5"/><rect x="1044.33" y="0" width="1" height="10"/><rect x="1051.17" y="0" width="1" height="5"/><rect x="1058.00" y="0" width="1" height="10"/><rect x="1064.83" y="0" width="1" height="5"/><rect x="1071.67" y="0" width="1" height="10"/><rect x="1078.50" y="0" width="1" height="5"/><rect x="1085.33" y="0" width="1" height="10"/><rect x="1092.17" y="0" width="1" height="5"/><rect x="1099.00" y="0" width="1" height="10"/><rect x="1105.83" y="0" width="1" height="5"/><rect x="1112.67" y="0" width="1" height="10"/><rect x="1119.50" y="0" width="1" height="5"/><rect x="1126.33" y="0" width="1" height="10"/><rect x="1133.17" y="0" width="1" height="5"/><rect x="1140.00" y="0" width="1" height="25"/><rect x="1146.83" y="0" width="1" height="5"/><rect x="1153.67" y="0" width="1" height="10"/><rect x="1160.50" y="0" width="1" height="5"/><rect x="1167.33" y="0" width="1" height="10"/><rect x="1174.17" y="0" width="1" height="5"/><rect x="1181.00" y="0" width="1" height="10"/><rect x="1187.83" y="0" width="1" height="5"/><rect x="1194.67" y="0" width="1" height="10"/><rect x="1201.50" y="0" width="1" height="5"/><rect x="1208.33" y="0" width="1" height="10"/><rect x="1215.17" y="0" width="1" height="5"/><rect x="1222.00" y="0" width="1" height="10"/><rect x="1228.83" y="0" width="1" height="5"/><rect x="1235.67" y="0" width="1" height="10"/><rect x="1242.50" y="0" width="1" height="5"/><rect x="1249.33" y="0" width="1" height="10"/><rect x="1256.17" y="0" width="1" height="5"/><rect x="1263.00" y="0" width="1" height="10"/><rect x="1269.83" y="0" width="1" height="5"/><rect x="1276.67" y="0" width="1" height="10"/><rect x="1283.50" y="0" width="1" height="5"/><rect x="1290.33" y="0" width="1" height="10"/><rect x="1297.17" y="0" width="1" height="5"/><rect x="1304.00" y="0" width="1" height="14"/><rect x="1310.83" y="0" width="1" height="5"/><rect x="1317.67" y="0" width="1" height="10"/><rect x="1324.50" y="0" width="1" height="5"/><rect x="1331.33" y="0" width="1" height="10"/><rect x="1338.17" y="0" width="1" height="5"/><rect x="1345.00" y="0" width="1" height="10"/><rect x="1351.83" y="0" width="1" height="5"/><rect x="1358.67" y="0" width="1" height="10"/><rect x="1365.50" y="0" width="1" height="5"/><rect x="1372.33" y="0" width="1" height="10"/><rect x="1379.17" y="0" width="1" height="5"/><rect x="1386.00" y="0" width="1" height="10"/><rect x="1392.83" y="0" width="1" height="5"/><rect x="1399.67" y="0" width="1" height="10"/><rect x="1406.50" y="0" width="1" height="5"/><rect x="1413.33" y="0" width="1" height="10"/><rect x="1420.17" y="0" width="1" height="5"/><rect x="1427.00" y="0" width="1" height="10"/><rect x="1433.83" y="0" width="1" height="5"/><rect x="1440.67" y="0" width="1" height="10"/><rect x="1447.50" y="0" width="1" height="5"/><rect x="1454.33" y="0" width="1" height="10"/><rect x="1461.17" y="0" width="1" height="5"/><rect x="1468.00" y="0" width="1" height="25"/><rect x="1474.83" y="0" width="1" height="5"/></svg>
<span id="t31" style="left:170.3px;top:410.64px;font:700 10px/12px 'Liberation Sans',sans-serif;color:#4f4f54;transform:scaleX(1.0278);transform-origin:0 0;">01:00:00:00</span>
<span id="t32" style="left:1371px;top:410.64px;font:700 10px/12px 'Liberation Sans',sans-serif;color:#434348;transform:scaleX(1.0278);transform-origin:0 0;">01:00:50:00</span>
<span id="t33" style="left:162.5px;top:507.33px;font:400 10px/12px 'Liberation Sans',sans-serif;color:#4a4a4f;transform:scaleX(1.0733);transform-origin:0 0;">00:59:56:00</span>
<svg style="left:156px;top:404px" width="18" height="92"><path d="M2 1.2H15Q16.2 1.2 16.2 2.4V6.6L8.6 13.8L1 6.6V2.4Q1 1.2 2 1.2Z" fill="#909090"/><rect x="7.6" y="10" width="2" height="80" fill="#8c8c8c"/></svg>
<div style="left:156px;top:534px;width:1px;height:282px;background:#26262a;"></div>
<div style="left:484px;top:495px;width:1px;height:282px;background:#26262a;"></div>
<div style="left:1140px;top:495px;width:1px;height:282px;background:#26262a;"></div>
<div style="left:1468px;top:495px;width:1px;height:282px;background:#26262a;"></div>
<div style="left:811px;top:495px;width:3px;height:282px;background:#141417;"></div>
<div style="left:812px;top:495px;width:1px;height:282px;background:#8e8e8e;"></div>
<svg style="left:8px;top:4px" width="22" height="22" viewBox="0 0 22 22" ><defs><linearGradient id="lg1" x1="0" y1="0" x2="0" y2="1"><stop offset="0" stop-color="#2e4a6a"/><stop offset="1" stop-color="#1f3450"/></linearGradient><radialGradient id="pc" cx="0.5" cy="0.85" r="0.8"><stop offset="0" stop-color="#e8fbff"/><stop offset="0.45" stop-color="#2ad2f6"/><stop offset="1" stop-color="#1aa8ee"/></radialGradient><radialGradient id="py" cx="0.85" cy="0.2" r="0.9"><stop offset="0" stop-color="#fffbe0"/><stop offset="0.45" stop-color="#f0f02a"/><stop offset="1" stop-color="#d8e020"/></radialGradient><radialGradient id="pr" cx="0.15" cy="0.2" r="0.9"><stop offset="0" stop-color="#fff0e8"/><stop offset="0.45" stop-color="#ff5a4a"/><stop offset="1" stop-color="#f0602a"/></radialGradient></defs><rect x="1.3" y="1.3" width="18.6" height="18.6" rx="3.6" fill="url(#lg1)" stroke="#dfe3ea" stroke-width="1"/><path d="M10.4 3.8C13.2 3.8 13.6 7 10.4 9.9C7.2 7 7.6 3.8 10.4 3.8Z" fill="url(#pc)"/><path d="M4 14.6C2.6 12.2 5.4 10.2 9.7 10.9C8.6 15.2 5.4 17 4 14.6Z" fill="url(#py)"/><path d="M16.8 14.6C18.2 12.2 15.4 10.2 11.1 10.9C12.2 15.2 15.4 17 16.8 14.6Z" fill="url(#pr)"/></svg>
<svg style="left:17px;top:37px" width="24" height="20" viewBox="0 0 24 20" ><path d="M2.6 14.6L1.2 4.9L18.8 2.6L19.2 5" fill="none" stroke="#c4c4c4" stroke-width="1.1" stroke-linejoin="round"/><rect x="3.9" y="5.9" width="17.7" height="12.3" rx="1.4" fill="#19191d" stroke="#f0f0f0" stroke-width="1.4"/><circle cx="9.2" cy="10.4" r="1.4" fill="#f4f4f4"/><path d="M5.4 16.8V15.4L8.6 13.4L10.8 15L14.8 11.6L20.2 15.4V16.8Z" fill="#8e8e8e"/><path d="M5.4 15.4L8.6 13.4L10.8 15L14.8 11.6L20.2 15.4" fill="none" stroke="#e4e4e4" stroke-width="1"/></svg>
<svg style="left:137px;top:39px" width="24" height="18" viewBox="0 0 24 18" ><rect x="1.5" y="1.5" width="16" height="11" rx="1.2" fill="none" stroke="#6a6a6e" stroke-width="1.1"/><g fill="#47474b"><rect x="2.6" y="2.6" width="6.4" height="4"/><rect x="10" y="2.6" width="6.4" height="4"/><rect x="2.6" y="7.6" width="6.4" height="3.8"/></g><rect x="10.6" y="8.6" width="11" height="7.8" rx="1" fill="#2e2e32" stroke="#7a7a7e" stroke-width="1.2"/><path d="M3.4 12.6V14.8H8.4M6.4 12.8L8.6 14.8L6.4 16.8" fill="none" stroke="#6a6a6e" stroke-width="1.1"/></svg>
<svg style="left:240px;top:40px" width="23" height="17" viewBox="0 0 23 17" ><rect x="1.6" y="1.6" width="19" height="13.4" rx="1.4" fill="none" stroke="#737377" stroke-width="1.2"/><path d="M3.4 3.4H18.8L11.1 8.3L18.8 13.2H3.4L11.1 8.3Z" fill="#5e5e62"/></svg>
<svg style="left:358px;top:40px" width="23" height="17" viewBox="0 0 23 17" ><rect x="1.6" y="1.6" width="19" height="13.4" rx="1.4" fill="#2c2c30" stroke="#737377" stroke-width="1.2"/><text x="11.1" y="12.6" font-family="Liberation Serif" font-weight="700" font-size="11.5" fill="#8a8a8e" text-anchor="middle">T</text></svg>
<svg style="left:444px;top:36px" width="24" height="23" viewBox="0 0 24 23" ><g fill="none" stroke="#808084" stroke-width="1.3" stroke-linecap="round"><path d="M3.2 20.2L11.4 10.4" stroke-width="3.2" stroke="#808084"/><path d="M3.2 20.2L11.4 10.4" stroke-width="1.4" stroke="#19191d"/></g><g stroke="#808084" stroke-width="1" stroke-linecap="round"><path d="M15.4 2V7.4M12.7 4.7H18.1"/><path d="M19.4 9.4V14M17.1 11.7H21.7"/><path d="M15.6 14.6V18.2M13.8 16.4H17.4"/><path d="M8.2 6V8.4M7 7.2H9.4"/></g></svg>
<svg style="left:8px;top:72px" width="18" height="16" viewBox="0 0 18 16" ><rect x="1.6" y="1.6" width="15" height="12.6" rx="1" fill="none" stroke="#5a5a5e" stroke-width="1.1"/><rect x="1.6" y="1.6" width="5" height="12.6" fill="#5a5a5e"/></svg>
<svg style="left:35px;top:77px" width="11" height="9" viewBox="0 0 11 9" ><path d="M1.6 1.8L5.5 5.8L9.4 1.8" fill="none" stroke="#77777b" stroke-width="1.4"/></svg>
<svg style="left:66px;top:72px" width="17" height="18" viewBox="0 0 17 18" ><g fill="none" stroke="#737377" stroke-width="1.2"><path d="M9.6 13.8H1.6V1.8H8.2L11.8 5.4V9"/><path d="M8 1.8V5.6H11.8" stroke-width="1"/><path d="M13.4 8.6V15.6M10.8 13L13.4 15.8L16 13"/></g></svg>
<svg style="left:94px;top:71px" width="20" height="19" viewBox="0 0 20 19" ><g fill="none" stroke="#737377" stroke-width="1.2"><path d="M11 14.2H1.6V2.4H6.4L7.8 4.4H16V9.6"/><path d="M1.6 6.2H16" stroke-width="1"/><path d="M15.4 9.6V16.6M12.8 14L15.4 16.8L18 14"/></g></svg>
<svg style="left:125px;top:66px" width="75" height="30" viewBox="0 0 75 30" ><g fill="none" stroke="#737377" stroke-width="1.3" stroke-linecap="round" stroke-linejoin="round"><path d="M13.6 19.5H12.2A3 3 0 0 1 10 14.4L16.2 7.7"/><path d="M12.3 7.6H16.3V11.8"/><path d="M20.6 8.2H21.6A3 3 0 0 1 23.8 13.4L17.4 20.2"/><path d="M21.4 20.3H17.3V16.1"/></g><g fill="none" stroke="#737377" stroke-width="1.3"><rect x="-4.8" y="-2.4" width="9.6" height="4.8" rx="2.4" transform="translate(55.6 11.2) rotate(-49)"/><rect x="-4.8" y="-2.4" width="9.6" height="4.8" rx="2.4" transform="translate(51.9 15.7) rotate(-49)"/></g><g stroke="#5e5e62" stroke-width="1" stroke-linecap="round"><path d="M48 7.1L49.4 9M51.3 6.9L51.6 8.6M45.2 11.2L47.8 11.9M59.5 16.3L61.8 17.3M57.2 17.5L59.5 19.6M56.2 18.8L56.7 20.6"/></g></svg>
<svg style="left:330px;top:66px" width="120" height="30" viewBox="0 0 120 30" ><rect x="6.6" y="9.5" width="17" height="9.6" fill="none" stroke="#7a7a7e" stroke-width="1"/><rect x="8.2" y="11.2" width="5.6" height="5" fill="#808084"/><path d="M15.4 11.8H21.4M15.4 13.7H21M15.4 15.6H21" stroke="#808084" stroke-width="0.9"/><g fill="#ffffff"><rect x="35" y="9" width="4" height="4"/><rect x="41" y="9" width="4" height="4"/><rect x="47" y="9" width="4" height="4"/><rect x="35" y="15" width="4" height="4"/><rect x="41" y="15" width="4" height="4"/><rect x="47" y="15" width="4" height="4"/></g><rect x="63.6" y="9.6" width="15" height="6.6" rx="1.2" fill="#38383c" stroke="#6e6e72" stroke-width="1.1"/><path d="M63 18.6H72M76 18.6H79" stroke="#6e6e72" stroke-width="1"/><g fill="#77777b"><rect x="92" y="9.2" width="2" height="1.8"/><rect x="96" y="9.2" width="10" height="1.8"/><rect x="92" y="13.1" width="2" height="1.8"/><rect x="96" y="13.1" width="10" height="1.8"/><rect x="92" y="17" width="2" height="1.8"/><rect x="96" y="17" width="10" height="1.8"/></g></svg>
<svg style="left:575px;top:66px" width="120" height="30" viewBox="0 0 120 30" ><g fill="#8a8a8e"><rect x="9" y="9.2" width="9.8" height="1.8"/><rect x="9" y="13.1" width="8" height="1.8"/><rect x="9" y="17" width="4" height="1.8"/></g><path d="M23.2 8.4V20M19.6 16.6L23.2 20.4L26.8 16.6" fill="none" stroke="#8a8a8e" stroke-width="1.9"/><g fill="none" stroke="#3e3e42" stroke-width="1.2"><path d="M49.4 12.4A6 6 0 0 1 60.6 12.6"/><path d="M60.4 16.8A6 6 0 0 1 49.2 16.6"/><path d="M48.4 9.6V12.8H51.6"/><path d="M61.6 19.6V16.4H58.4"/></g><rect x="84.8" y="8.7" width="14.6" height="10.8" rx="0.5" fill="none" stroke="#727276" stroke-width="1.2"/><circle cx="88" cy="12" r="1.2" fill="#727276"/><path d="M86.4 17.8L88.6 15.4L90.4 17.2L93.8 12.8L97.8 17.8Z" fill="#5a5a5e"/></svg>
<svg style="left:680px;top:66px" width="140" height="30" viewBox="0 0 140 30" ><g stroke="#6e6e72" fill="none" stroke-width="1"><path d="M5 7.5H25" stroke-dasharray="1.6 1.2"/><path d="M5 21.5H25" stroke-dasharray="1.6 1.2"/><rect x="9.8" y="10.4" width="10.4" height="8" rx="0.6" stroke-width="1.1"/><path d="M5 10.4H6.8V18.4H5M25 10.4H23.2V18.4H25"/></g><rect x="11.6" y="12.2" width="1.4" height="1.4" fill="#5a5a5e"/><path d="M11.6 17L13.4 15L14.6 16.2L16.2 13.8L18.6 17Z" fill="#505054"/><g fill="none" stroke="#ffffff" stroke-width="1.2"><rect x="35.4" y="8.4" width="16.4" height="6.2"/><path d="M39 8.4V14.6M48.2 8.4V14.6"/><rect x="35.4" y="16.4" width="16.4" height="3.2"/><path d="M43.6 16.4V19.6"/></g><rect x="40" y="9.4" width="7.4" height="4.2" fill="#5e5e62"/><g fill="#38383c" stroke="#58585c" stroke-width="1"><rect x="70.4" y="8.6" width="7" height="5" rx="1"/><rect x="78.8" y="8.6" width="7" height="5" rx="1"/><rect x="70.4" y="14.8" width="7" height="5" rx="1"/><rect x="78.8" y="14.8" width="7" height="5" rx="1"/></g><g fill="none" stroke="#4c4c50" stroke-width="1"><circle cx="112.9" cy="11.8" r="1.1" fill="#5a5a5e"/><path d="M112.9 13L110.4 19.8M112.9 13L115.4 19.8M111.2 17.4H114.6"/><path d="M110.4 9A3.6 3.6 0 0 0 110.4 14.4M115.4 9A3.6 3.6 0 0 1 115.4 14.4"/><path d="M108.6 7.6A6 6 0 0 0 108.6 15.8M117.2 7.6A6 6 0 0 1 117.2 15.8" stroke="#3a3a3e"/></g></svg>
<svg style="left:1035px;top:66px" width="120" height="30" viewBox="0 0 120 30" ><path d="M11.4 12.6L15.1 16.6L18.8 12.6" fill="none" stroke="#8c8c8c" stroke-width="1.4"/><circle cx="62.6" cy="15" r="7.3" fill="none" stroke="#4a4a4e" stroke-width="1"/><path d="M62.8 10V15.2H68" fill="#4e4e52" stroke="#5a5a5e" stroke-width="1"/><path d="M69.8 12.4L71.2 15.4L72.8 12.4Z" fill="#5a5a5e"/><g fill="#505054"><circle cx="58.4" cy="11.4" r="0.6"/><circle cx="57.2" cy="15" r="0.6"/><circle cx="58.4" cy="18.8" r="0.6"/><circle cx="62.6" cy="20" r="0.6"/><circle cx="66.6" cy="18.8" r="0.6"/></g></svg>
<svg style="left:1195px;top:62px" width="280" height="38" viewBox="0 0 280 38" ><rect x="15.6" y="12.2" width="16.6" height="11.2" fill="none" stroke="#505054" stroke-width="1"/><path d="M18 17V14.6H21M29.8 17V14.6H26.8M18 18.6V21H21M29.8 18.6V21H26.8" fill="none" stroke="#5e5e62" stroke-width="1"/><path d="M43 16.8L47.4 21.2L51.8 16.8" fill="none" stroke="#7c7c80" stroke-width="1.4"/><rect x="74.6" y="12.6" width="17.4" height="10.6" rx="1.4" fill="none" stroke="#e0e0e0" stroke-width="1.3"/><path d="M74.6 15.4H92" stroke="#e0e0e0" stroke-width="1"/><g fill="#e0e0e0"><rect x="76" y="16.8" width="2" height="1.3"/><rect x="76" y="19" width="2" height="1.3"/><rect x="76" y="21.2" width="2" height="1.3"/><rect x="88" y="13.4" width="1.6" height="1.2"/></g><rect x="79.6" y="18" width="14" height="7.6" rx="1.2" fill="#f0f0f0"/><text x="86.6" y="24.3" font-family="Liberation Sans" font-weight="700" font-size="6.6" fill="#1c1c20" text-anchor="middle">HQ</text><path d="M100.8 16.8L105.2 21.2L109.6 16.8" fill="none" stroke="#7c7c80" stroke-width="1.4"/><g fill="none" stroke="#6a6a6e" stroke-width="1"><path d="M131.4 13.6H133.6V11.2M148.2 13.6H146V11.2M131.4 24H133.6V26.4M148.2 24H146V26.4"/></g><rect x="134.2" y="14" width="11.2" height="9.4" fill="#303034"/><path d="M135 22L137.6 18.4L139.4 20.4L141.6 17L145 22Z" fill="#4e4e52"/><rect x="135.4" y="15.4" width="1.6" height="1.6" fill="#4e4e52"/><path d="M157.4 16.8L161.8 21.2L166.2 16.8" fill="none" stroke="#7c7c80" stroke-width="1.4"/><g fill="none" stroke-width="1.7" stroke-linecap="round"><path d="M195.6 10.6A6.8 6.8 0 0 1 201.6 11.4" stroke="#e8862a"/><path d="M201.6 11.4A6.8 6.8 0 0 1 204.2 16.2" stroke="#e83a3a"/><path d="M204.2 16.2A6.8 6.8 0 0 1 202.6 21.6" stroke="#d23ad8"/><path d="M202.6 21.6A6.8 6.8 0 0 1 198.4 23.8" stroke="#3a72e8"/><path d="M198.4 23.8A6.8 6.8 0 0 1 194.8 23" stroke="#2ab06a"/></g><g fill="#f2d63a"><path d="M190.2 12.4L191 15L193.6 15.8L191 16.6L190.2 19.2L189.4 16.6L186.8 15.8L189.4 15Z"/><path d="M196 14.6L196.7 16.7L198.8 17.4L196.7 18.1L196 20.2L195.3 18.1L193.2 17.4L195.3 16.7Z"/><path d="M191.8 19.6L192.7 22.1L195.2 23L192.7 23.9L191.8 26.4L190.9 23.9L188.4 23L190.9 22.1Z"/></g><path d="M240.4 16.6H244L249.4 12.4V26.4L244 22.2H240.4Z" fill="#f4f4f4"/><path d="M251.6 16.6A3.6 3.6 0 0 1 251.6 22.2" fill="none" stroke="#f4f4f4" stroke-width="1.6"/><path d="M254 13.6A7 7 0 0 1 254 25.2" fill="none" stroke="#c8c8c8" stroke-width="1.5"/></svg>
<svg style="left:1375px;top:5px" width="95" height="20" viewBox="0 0 95 20" ><path d="M5 10H14.6" stroke="#38383c" stroke-width="1.2"/><rect x="41.6" y="5.6" width="9.4" height="9.4" rx="1" fill="none" stroke="#47474b" stroke-width="1.2"/><path d="M77.4 5.4L86.8 14.8M86.8 5.4L77.4 14.8" stroke="#58585c" stroke-width="1.2"/></svg>
<svg style="left:1120px;top:32px" width="40" height="32" viewBox="0 0 40 32" ><defs><linearGradient id="qe" x1="0" y1="0" x2="0" y2="1"><stop offset="0" stop-color="#1a1a1d"/><stop offset="1" stop-color="#3a3a3e"/></linearGradient></defs><path d="M15.9 14H12.7V23.1H29.3V14H25.9" fill="url(#qe)" stroke="#77777b" stroke-width="1.2"/><path d="M21 18V8.6M17.2 12L21 8.3L24.8 12" fill="none" stroke="#808084" stroke-width="1.5"/></svg>
<svg style="left:1250px;top:32px" width="40" height="32" viewBox="0 0 40 32" ><rect x="8.6" y="9.5" width="18.8" height="13.8" rx="1.2" fill="#151517" stroke="#77777b" stroke-width="1.2"/><path d="M11.6 15.6V12.6H14.6M24.4 15.6V12.6H21.4M11.6 17.4V20.4H14.6M24.4 17.4V20.4H21.4" fill="none" stroke="#77777b" stroke-width="1.1"/></svg>
<svg style="left:1370px;top:32px" width="40" height="32" viewBox="0 0 40 32" ><g fill="#8a8a8a"><path d="M8 8L15.7 14.3L13.3 16.7Z"/><path d="M14.3 17.4L16.5 15.2L17.7 16.4L15.5 18.6Z"/><path d="M16.6 19.4C17 17.6 19.6 17.6 21.4 19.2C22.6 20.4 23.6 21 24.9 21.4C22.8 23.8 19.6 24.4 17.6 23C16.4 22.1 16.4 20.6 16.6 19.4Z"/></g><g fill="none" stroke="#8a8a8a" stroke-linecap="round"><path d="M10.4 22.2L13.2 19.4" stroke-width="3.4"/><path d="M21.4 9.4A3.1 3.1 0 1 0 23.7 12.1" stroke-width="1.9" stroke-linecap="butt"/></g></svg>
<svg style="left:0px;top:360px" width="100" height="44" viewBox="0 0 100 44" ><g stroke="#3a3a3e" stroke-width="1.2"><path d="M16.3 17H31M14.2 21H24M16.3 25H24"/></g><path d="M30.6 10.3H33.4Q35.3 10.3 35.3 12.4V17.2M32.4 14.4L35.3 17.4L38.2 14.4" fill="none" stroke="#8a8a8a" stroke-width="1.2"/><rect x="24.6" y="21.9" width="12" height="8.2" rx="1.2" fill="none" stroke="#7a7a7e" stroke-width="1.2"/><path d="M26.6 22V30M34.6 22V30" stroke="#5e5e62" stroke-width="1"/><g stroke="#3a3a3e" stroke-width="1.2"><path d="M58.3 17H73M56.2 21H73M58.3 25H66"/></g><path d="M72.6 10.3H75.4Q77.3 10.3 77.3 12.4V17.2M74.4 14.4L77.3 17.4L80.2 14.4" fill="none" stroke="#8a8a8a" stroke-width="1.2"/><g fill="#8e8e8e"><ellipse cx="68.6" cy="30.4" rx="1.9" ry="1.5" transform="rotate(-20 68.6 30.4)"/><ellipse cx="74.8" cy="29" rx="1.9" ry="1.5" transform="rotate(-20 74.8 29)"/><path d="M69.6 24L76.6 22V29H75.6V24.8L70.6 26.2V30.4H69.6Z"/><path d="M69.6 23.8L76.6 21.8V24.4L69.6 26.4Z"/></g></svg>
<svg style="left:190px;top:360px" width="160" height="44" viewBox="0 0 160 44" ><g fill="none" stroke="#3c3c40" stroke-width="1"><rect x="17.6" y="14.4" width="11" height="8.8" rx="0.5"/><rect x="10.6" y="18.6" width="4.6" height="8.8" rx="0.6"/><rect x="30.8" y="18.6" width="4.6" height="8.8" rx="0.6"/><path d="M20.2 27L23 29.6L25.8 27"/></g><rect x="53.4" y="20.8" width="13" height="8.4" rx="0.5" fill="none" stroke="#4e4e52" stroke-width="1"/><rect x="62.7" y="14.4" width="12.4" height="8.8" rx="0.5" fill="#2c2c30" stroke="#7c7c80" stroke-width="1.2"/><path d="M70 27L73 29.8L76 27" fill="none" stroke="#7c7c80" stroke-width="1.1"/><rect x="99.6" y="24.4" width="14.4" height="4.8" rx="0.5" fill="none" stroke="#4e4e52" stroke-width="1"/><rect x="99.6" y="14.4" width="14.6" height="8.8" rx="0.5" fill="#2c2c30" stroke="#7c7c80" stroke-width="1.2"/><path d="M96.8 20L93.4 23.4L96.8 26.8M117.2 20L120.6 23.4L117.2 26.8" fill="none" stroke="#7c7c80" stroke-width="1.1"/><rect x="137.6" y="16.6" width="15" height="11" rx="0.5" fill="none" stroke="#4e4e52" stroke-width="1"/><rect x="144.4" y="21.4" width="14" height="11" fill="#212125" stroke="#77777b" stroke-width="1"/><circle cx="144.4" cy="21.4" r="1.1" fill="#212125" stroke="#8a8a8a" stroke-width="0.8"/><circle cx="144.4" cy="32.4" r="1.1" fill="#212125" stroke="#8a8a8a" stroke-width="0.8"/><circle cx="152" cy="25.4" r="1.8" fill="#77777b"/><path d="M148.4 32C148.6 28.4 155.4 28.4 155.6 32Z" fill="#77777b"/><path d="M151.6 10.6H154.4Q155.8 10.6 155.8 12V16.4M153.4 14L155.8 16.6L158.2 14" fill="none" stroke="#77777b" stroke-width="1"/></svg>
<svg style="left:0px;top:430px" width="130" height="40" viewBox="0 0 130 40" ><defs><linearGradient id="bg1" x1="0" x2="1" y1="0" y2="0"><stop offset="0" stop-color="#909090"/><stop offset="1" stop-color="#3a3a3e"/></linearGradient><linearGradient id="bg2" x1="0" x2="0" y1="0" y2="1"><stop offset="0" stop-color="#3e3e42"/><stop offset="1" stop-color="#2a2a2e"/></linearGradient></defs><rect x="15.4" y="14.4" width="17" height="3.2" rx="0.5" fill="#3a3a3e" stroke="#8e8e8e" stroke-width="0.9"/><path d="M19.6 14.4V17.6M28 14.4V17.6" stroke="#8e8e8e" stroke-width="0.8"/><rect x="17" y="19.4" width="15" height="3.2" fill="#38383c"/><path d="M18.2 21H21.4" stroke="#a0a0a0" stroke-width="0.9"/><rect x="14.3" y="24.7" width="13.4" height="3.2" fill="#38383c"/><path d="M15.2 26.3H18.4" stroke="#a0a0a0" stroke-width="0.9"/><path d="M28.2 24.4L30.8 27.6L35.6 21.4" fill="none" stroke="#9a9a9a" stroke-width="1.5"/><rect x="52" y="16" width="14" height="2.8" rx="1" fill="url(#bg1)"/><rect x="55" y="20" width="16" height="2.8" rx="1" fill="url(#bg1)"/><rect x="52" y="24.2" width="14" height="2.8" rx="1" fill="url(#bg1)"/><path d="M60.4 14V27.6M58.4 14H62.4" stroke="#8e8e8e" stroke-width="1"/><path d="M66.2 12.4L66.6 13.6M68.4 14.2L69.6 13.2M69.6 16.4L70.4 17" stroke="#5a5a5e" stroke-width="0.9"/><rect x="85" y="16" width="2.6" height="11" fill="url(#bg2)"/><rect x="89" y="16" width="4" height="11" fill="url(#bg2)"/><rect x="96" y="16" width="9.4" height="11" fill="url(#bg2)"/><rect x="106.4" y="16" width="2" height="11" fill="url(#bg2)"/><g fill="#38383c"><rect x="90.4" y="24.4" width="1.4" height="1.6"/><rect x="97.6" y="24.4" width="1.6" height="1.6"/><rect x="101.6" y="24.4" width="1.6" height="1.6"/></g><path d="M94.3 15V29" stroke="#4e4e52" stroke-width="0.9" stroke-dasharray="1.3 1"/><path d="M102.4 11.8L104.6 13.8L106.8 11.8" fill="none" stroke="#6a6a6e" stroke-width="0.9"/></svg>
<svg style="left:0px;top:496px" width="130" height="40" viewBox="0 0 130 40" ><rect x="17.6" y="14.6" width="14.4" height="11" rx="0.6" fill="#2a2a2e" stroke="#e6e6e6" stroke-width="1.3"/><path d="M22.4 17.8L20 20L22.4 22.2M27.2 17.8L29.6 20L27.2 22.2" fill="none" stroke="#e6e6e6" stroke-width="1.2"/><path d="M13.2 15.4H15.2V26.2H13.2M36.6 15.4H34.6V26.2H36.6" fill="none" stroke="#a8a8a8" stroke-width="1"/><g fill="none" stroke="#8a8a8a" stroke-width="1.1"><circle cx="56.4" cy="24" r="2.3"/><circle cx="65" cy="24" r="2.3"/><path d="M57.4 13.2L63.8 22.2M64 13.2L57.6 22.2"/></g><path d="M92 14.6Q92 13.4 93.2 13.4H100.8Q102 13.4 102 14.6V22.2L97 26L92 22.2Z" fill="#0080e6" stroke="#14141a" stroke-width="0.8"/></svg>
<div style="left:348px;top:193px;width:944px;height:531px;background:#ffffff;box-shadow:0 0 0 1px #131315, 0 4px 16px rgba(0,0,0,.45)"></div>
<svg style="left:358px;top:201px" width="13" height="13" viewBox="0 0 13 13"><rect x="0.1" y="0.1" width="11.9" height="11.9" rx="2.6" fill="#274361"/><circle cx="5.9" cy="3.4" r="1.8" fill="#27d6f8"/><circle cx="3.5" cy="8" r="1.8" fill="#e4ee26"/><circle cx="8.6" cy="8" r="1.8" fill="#f7543e"/><circle cx="6" cy="6.4" r="0.9" fill="#c8d8d8" opacity="0.6"/></svg>
<span id="t34" style="left:377px;top:200.84px;font:400 12px/14px 'Liberation Sans',sans-serif;color:#000;transform:scaleX(1.0281);transform-origin:0 0;">Import Media</span>
<svg style="left:1271px;top:201px" width="12" height="12"><path d="M1 1L11 11M11 1L1 11" stroke="#111" stroke-width="1.1"/></svg>
<svg style="left:360px;top:233px" width="90" height="14" fill="none"><path d="M1.6 7H13M6.4 2.2L1.6 7L6.4 11.8" stroke="#6e6e6e" stroke-width="1.7"/><path d="M31.6 7H43M38.2 2.2L43 7L38.2 11.8" stroke="#d4d4d4" stroke-width="1.7"/><path d="M57.6 5L60.5 7.9L63.4 5" stroke="#6e6e6e" stroke-width="1.5"/><path d="M81 12.8V1.8M75.8 6.8L81 1.6L86.2 6.8" stroke="#6e6e6e" stroke-width="1.7"/></svg>
<div style="left:454px;top:229px;width:592px;height:22px;border:1px solid #d9d9d9;box-sizing:border-box;background:#fff"></div>
<div style="left:1046px;top:229px;width:20px;height:22px;border:1px solid #d9d9d9;border-left:none;box-sizing:border-box;background:#fff"></div>
<svg style="left:459px;top:231px" width="14" height="17"><path d="M0.5 0.5H12.5V15.5H0.5Z" fill="#ffe896" stroke="#e8c95c"/><path d="M10.5 9.5H12.5V15.5H10.5Z" fill="#f7d774" stroke="#e0b84a"/></svg>
<span id="t35" style="left:494px;top:232.84px;font:400 12px/14px 'Liberation Sans',sans-serif;color:#000;transform:scaleX(0.9136);transform-origin:0 0;">This PC</span>
<span id="t36" style="left:556.4px;top:232.84px;font:400 12px/14px 'Liberation Sans',sans-serif;color:#000;transform:scaleX(0.9404);transform-origin:0 0;">Local Disk (C:)</span>
<span id="t37" style="left:654.2px;top:232.84px;font:400 12px/14px 'Liberation Sans',sans-serif;color:#000;transform:scaleX(0.8933);transform-origin:0 0;">Users</span>
<span id="t38" style="left:705px;top:232.84px;font:400 12px/14px 'Liberation Sans',sans-serif;color:#000;transform:scaleX(0.9203);transform-origin:0 0;">Sheila</span>
<span id="t39" style="left:758.8px;top:232.84px;font:400 12px/14px 'Liberation Sans',sans-serif;color:#000;transform:scaleX(0.9538);transform-origin:0 0;">Videos</span>
<span id="t40" style="left:816.5px;top:232.84px;font:400 12px/14px 'Liberation Sans',sans-serif;color:#000;transform:scaleX(0.9667);transform-origin:0 0;">Stills</span>
<svg style="left:478px;top:233px" width="340" height="14" fill="none" stroke="#707070" stroke-width="1.7"><path d="M2.7 4.3L5.8 7.4L2.7 10.5"/><path d="M64.7 4.3L67.8 7.4L64.7 10.5"/><path d="M162.7 4.3L165.8 7.4L162.7 10.5"/><path d="M213.7 4.3L216.8 7.4L213.7 10.5"/><path d="M267.7 4.3L270.8 7.4L267.7 10.5"/><path d="M326.7 4.3L329.8 7.4L326.7 10.5"/></svg>
<svg style="left:1030px;top:235px" width="12" height="10" fill="none" stroke="#6c6c6c" stroke-width="1.8"><path d="M1.6 3.8L6 8.2L10.4 3.8"/></svg>
<svg style="left:1049px;top:233px" width="14" height="14" fill="none" stroke="#696969" stroke-width="1.5"><path d="M8.44 4.05A4.2 4.2 0 1 1 4.03 5.03"/><path d="M3.6 2.4H7.9V6.6"/></svg>
<div style="left:1078px;top:229px;width:202px;height:22px;border:1px solid #d9d9d9;box-sizing:border-box;background:#fff"></div>
<span id="t41" style="left:1087.3px;top:232.84px;font:400 12px/14px 'Liberation Sans',sans-serif;color:#6d6d6d;transform:scaleX(0.9175);transform-origin:0 0;">Search Stills</span>
<svg style="left:1258px;top:233px" width="14" height="14" fill="none" stroke="#5a5a5a" stroke-width="1.4"><circle cx="8.2" cy="5.4" r="3.4"/><path d="M5.8 7.9L1.6 12.2"/></svg>
<div style="left:348px;top:258px;width:944px;height:30px;background:#f5f6f7;"></div>
<div style="left:348px;top:288px;width:944px;height:1px;background:#e9eaeb;"></div>
<span id="t42" style="left:366.4px;top:265.84px;font:400 12px/14px 'Liberation Sans',sans-serif;color:#1c2d62;transform:scaleX(0.9568);transform-origin:0 0;">Organize</span>
<svg style="left:418px;top:271px" width="9" height="6"><path d="M0.5 0.5H8.5L4.5 5Z" fill="#1c2d62"/></svg>
<span id="t43" style="left:457.6px;top:265.84px;font:400 12px/14px 'Liberation Sans',sans-serif;color:#1c2d62;">New folder</span>
<svg style="left:1171px;top:267px" width="15" height="12"><rect x="0.5" y="0.5" width="13.5" height="10" fill="#fff" stroke="#9a9a9a"/><rect x="2" y="2" width="10.5" height="7" fill="#bfe0f8"/><path d="M2 9V6Q5 3.5 8 6.5Q10 5.4 12.5 6.6V9Z" fill="#3c6e8f"/><path d="M2 9V7Q5 5.5 12.5 9Z" fill="#4f8a4a"/></svg>
<svg style="left:1195px;top:271px" width="9" height="6"><path d="M0.5 0.5H8.5L4.5 5Z" fill="#1c2d62"/></svg>
<svg style="left:1224px;top:267px" width="18" height="13"><rect x="1.5" y="0.5" width="15" height="11" fill="#fff" stroke="#7a7a7a"/><rect x="1.5" y="0.5" width="15" height="1.6" fill="#7a7a7a"/><rect x="10.2" y="2.2" width="5.8" height="8.8" fill="#3a96e6"/><rect x="5.4" y="2" width="1" height="9.5" fill="#7a7a7a"/></svg>
<svg style="left:1260px;top:264px" width="18" height="18"><circle cx="9" cy="9" r="8.2" fill="#0f5fc2"/><text x="9" y="13.6" font-family="Liberation Sans" font-weight="700" font-size="13" fill="#fff" text-anchor="middle">?</text></svg>
<div style="left:506px;top:289px;width:1px;height:359px;background:#f0f0f0;"></div>
<div style="left:348px;top:561px;width:156px;height:24px;background:#d9d9d9;"></div>
<span id="t44" style="left:393px;top:310.14px;font:400 12px/14px 'Liberation Sans',sans-serif;color:#000;transform:scaleX(0.9529);transform-origin:0 0;">Quick access</span>
<span id="t45" style="left:393px;top:342.14px;font:400 12px/14px 'Liberation Sans',sans-serif;color:#000;transform:scaleX(0.9704);transform-origin:0 0;">OneDrive - Personal</span>
<span id="t46" style="left:393px;top:374.14px;font:400 12px/14px 'Liberation Sans',sans-serif;color:#000;transform:scaleX(0.9136);transform-origin:0 0;">This PC</span>
<span id="t47" style="left:401px;top:398.14px;font:400 12px/14px 'Liberation Sans',sans-serif;color:#000;transform:scaleX(0.9603);transform-origin:0 0;">3D Objects</span>
<span id="t48" style="left:401px;top:422.14px;font:400 12px/14px 'Liberation Sans',sans-serif;color:#000;transform:scaleX(0.9879);transform-origin:0 0;">Desktop</span>
<span id="t49" style="left:401px;top:446.14px;font:400 12px/14px 'Liberation Sans',sans-serif;color:#000;transform:scaleX(1.0049);transform-origin:0 0;">Documents</span>
<span id="t50" style="left:401px;top:470.14px;font:400 12px/14px 'Liberation Sans',sans-serif;color:#000;transform:scaleX(0.9937);transform-origin:0 0;">Downloads</span>
<span id="t51" style="left:401px;top:494.14px;font:400 12px/14px 'Liberation Sans',sans-serif;color:#000;transform:scaleX(1.0209);transform-origin:0 0;">Music</span>
<span id="t52" style="left:401px;top:518.14px;font:400 12px/14px 'Liberation Sans',sans-serif;color:#000;transform:scaleX(0.9686);transform-origin:0 0;">Pictures</span>
<span id="t53" style="left:401px;top:542.14px;font:400 12px/14px 'Liberation Sans',sans-serif;color:#000;transform:scaleX(0.9593);transform-origin:0 0;">Videos</span>
<span id="t54" style="left:401px;top:566.14px;font:400 12px/14px 'Liberation Sans',sans-serif;color:#000;transform:scaleX(0.9531);transform-origin:0 0;">Local Disk (C:)</span>
<span id="t55" style="left:401px;top:590.14px;font:400 12px/14px 'Liberation Sans',sans-serif;color:#000;transform:scaleX(0.9775);transform-origin:0 0;">Secondary Hard Dri</span>
<span id="t56" style="left:393px;top:622.14px;font:400 12px/14px 'Liberation Sans',sans-serif;color:#000;transform:scaleX(1.0224);transform-origin:0 0;">Network</span>
<svg style="left:372px;top:308px" width="18" height="16" viewBox="0 0 18 16"><path d="M11 2.4L12.5 6.6L16.4 6.9L13.3 9.5L14.4 13.8L11 11.2L7.4 14.4L8.6 9.6L5.6 7.2L9.5 6.7Z" fill="#1e88de"/><path d="M11 2.4L12.5 6.6L11 11.2L9.5 6.7Z" fill="#4aa6ee"/><path d="M3.6 5.2L7.6 6.4M2.4 9.6L6.6 9.4M3.6 13.4L7.4 11.8" stroke="#5cb0f0" stroke-width="1" stroke-linecap="round"/></svg>
<svg style="left:371px;top:342px" width="18" height="13" viewBox="0 0 18 13"><path d="M4.6 11.8A3.4 3.4 0 0 1 3.9 5.1A4.6 4.6 0 0 1 12.2 3.9A3.6 3.6 0 0 1 16.6 7.6A2.6 2.6 0 0 1 14.8 11.8Z" fill="#1c84dc"/><path d="M3.9 5.1A4.6 4.6 0 0 1 12.2 3.9A3.6 3.6 0 0 1 15.4 5.4L6.4 8.4Z" fill="#0c5cb4"/><path d="M1.4 8.6A3.4 3.4 0 0 1 3.9 5.1L10.6 9.4L4.6 11.8A3.4 3.4 0 0 1 1.4 8.6Z" fill="#2a94e6"/></svg>
<svg style="left:371px;top:373px" width="18" height="16" viewBox="0 0 18 16"><defs><linearGradient id="pcg" x1="0" y1="0" x2="1" y2="1"><stop offset="0" stop-color="#8fd6fa"/><stop offset="0.5" stop-color="#4ab6f2"/><stop offset="1" stop-color="#2e9ee6"/></linearGradient></defs><rect x="1.8" y="1.8" width="14.4" height="9" fill="url(#pcg)" stroke="#3a94d4" stroke-width="1"/><rect x="7.4" y="11.4" width="3.2" height="1.6" fill="#a8b4be"/><rect x="5.4" y="12.6" width="7.2" height="1" fill="#b8c2ca"/><rect x="1.4" y="14.6" width="15.4" height="1" fill="#9aa2a8"/></svg>
<svg style="left:379px;top:396px" width="18" height="18" viewBox="0 0 18 18"><path d="M9 0.8L17 4.2L9 7.6L1 4.2Z" fill="#6fd6e4"/><path d="M1 4.2L9 7.6V17.2L1 13.4Z" fill="#c4ecf2"/><path d="M17 4.2L9 7.6V17.2L17 13.4Z" fill="#1796b8"/><path d="M1 13.4L9 10.4V17.2Z" fill="#8fd8e2" opacity="0.8"/><path d="M17 13.4L9 10.4V17.2Z" fill="#0e7a9a"/></svg>
<svg style="left:379px;top:422px" width="18" height="14" viewBox="0 0 18 14"><defs><linearGradient id="dkg" x1="0" y1="0" x2="1" y2="1"><stop offset="0" stop-color="#2aa6f6"/><stop offset="1" stop-color="#1a8ee8"/></linearGradient></defs><rect x="1" y="1" width="16" height="11.8" fill="url(#dkg)"/><path d="M9.6 1L13.6 1L7 10.6H3Z" fill="#48b4fa" opacity="0.5"/><rect x="1" y="10.6" width="16" height="2.2" fill="#0f6cc4"/><rect x="2.2" y="11.3" width="0.9" height="0.9" fill="#fff"/><rect x="13" y="11.3" width="0.9" height="0.9" fill="#fff"/><rect x="14.8" y="11.3" width="0.9" height="0.9" fill="#fff"/></svg>
<svg style="left:381px;top:444px" width="14" height="18" viewBox="0 0 14 18"><path d="M1.5 1.8H9.6L12.6 4.8V16.4H1.5Z" fill="#fff" stroke="#9a9a9a" stroke-width="1"/><path d="M9.6 1.8V4.8H12.6" fill="#e8e8e8" stroke="#9a9a9a" stroke-width="0.8"/><path d="M3.2 7.4H10.8M3.2 9.6H10.8" stroke="#2a7ad0" stroke-width="1"/><path d="M3.2 12H5.8M3.2 14H10.8" stroke="#a0a0a0" stroke-width="1"/><rect x="7" y="11" width="3.8" height="2.2" fill="#4a8a5a"/><path d="M3.4 6L4.8 3.6L6.2 6M7 4.6H9" stroke="#2a7ad0" stroke-width="0.9" fill="none"/></svg>
<svg style="left:379px;top:468px" width="18" height="18" viewBox="0 0 18 18"><path d="M6 1H12.6V9H17L9.2 16.8L1.2 9H6Z" fill="#2b8ae2"/><path d="M6 1H12.6V3.4H6Z" fill="#4aa2ee"/></svg>
<svg style="left:380px;top:492px" width="16" height="18" viewBox="0 0 16 18"><ellipse cx="5.2" cy="14.2" rx="3.2" ry="2.6" fill="#1e9af5"/><path d="M7.2 14.4V1.2H8.8C9.2 4 13.4 5.2 12.8 9.2C12.6 10.6 11.8 11.6 11 12.2C11.8 9.4 10.6 7.2 8.8 6.4V14.4Z" fill="#1e9af5"/></svg>
<svg style="left:379px;top:518px" width="18" height="14" viewBox="0 0 18 14"><defs><linearGradient id="skg" x1="0" y1="0" x2="0" y2="1"><stop offset="0" stop-color="#8fc6ee"/><stop offset="1" stop-color="#dceefa"/></linearGradient></defs><rect x="1.5" y="1.5" width="15.4" height="11" fill="#fff" stroke="#a6a6a6" stroke-width="1"/><rect x="3.2" y="3.2" width="12" height="7.6" fill="url(#skg)"/><path d="M3.2 8.4Q6 5.2 9.4 7.2Q12 8.6 15.2 7.6V10.8H3.2Z" fill="#3f7a6a"/><path d="M3.2 9.6Q8 8.4 15.2 9.8V10.8H3.2Z" fill="#2e5f8e"/></svg>
<svg style="left:380px;top:541px" width="16" height="17" viewBox="0 0 16 17"><rect x="1" y="1" width="13.8" height="14.6" fill="#3a3a3a" stroke="#222" stroke-width="0.6"/><g fill="#f4f4f4"><rect x="1.9" y="2" width="1.3" height="1.4"/><rect x="1.9" y="4.6" width="1.3" height="1.4"/><rect x="1.9" y="7.2" width="1.3" height="1.4"/><rect x="1.9" y="9.8" width="1.3" height="1.4"/><rect x="1.9" y="12.4" width="1.3" height="1.4"/><rect x="12.6" y="2" width="1.3" height="1.4"/><rect x="12.6" y="4.6" width="1.3" height="1.4"/><rect x="12.6" y="7.2" width="1.3" height="1.4"/><rect x="12.6" y="9.8" width="1.3" height="1.4"/><rect x="12.6" y="12.4" width="1.3" height="1.4"/></g><rect x="4" y="2" width="7.8" height="6" fill="#5a9ad8"/><rect x="4" y="5.6" width="7.8" height="2.4" fill="#d24a3a"/><circle cx="8.6" cy="4.4" r="1.5" fill="#e8c83a"/><rect x="4" y="8.8" width="7.8" height="6" fill="#4a8ad0"/><rect x="4" y="12.6" width="7.8" height="2.2" fill="#e0b030"/><rect x="7.6" y="9.6" width="2" height="3" fill="#b83a2a"/></svg>
<svg style="left:379px;top:567px" width="18" height="14" viewBox="0 0 18 14"><g fill="#1fa6f2"><rect x="0.8" y="0.2" width="2.8" height="2.8"/><rect x="4.2" y="0.2" width="2.8" height="2.8"/><rect x="0.8" y="3.6" width="2.8" height="2.8"/><rect x="4.2" y="3.6" width="2.8" height="2.8"/></g><path d="M4.2 5.6H14.6L16 9.2H2.4Z" fill="#cfd4d9"/><rect x="2.4" y="9" width="13.4" height="3" rx="0.6" fill="#2c2c2c"/><rect x="2.4" y="11.4" width="13.4" height="0.8" fill="#8a8a8a"/><rect x="12.2" y="10" width="1.4" height="1.2" fill="#3ee03e"/></svg>
<svg style="left:379px;top:591px" width="18" height="14" viewBox="0 0 18 14"><path d="M4.2 5.6H14.6L16 9.2H2.4Z" fill="#cfd4d9"/><rect x="2.4" y="9" width="13.4" height="3" rx="0.6" fill="#2c2c2c"/><rect x="2.4" y="11.4" width="13.4" height="0.8" fill="#8a8a8a"/><rect x="12.2" y="10" width="1.4" height="1.2" fill="#3ee03e"/></svg>
<svg style="left:371px;top:619px" width="20" height="19" viewBox="0 0 20 19"><defs><radialGradient id="glb" cx="0.4" cy="0.35" r="0.7"><stop offset="0" stop-color="#e8f4fc"/><stop offset="0.6" stop-color="#7fbde8"/><stop offset="1" stop-color="#3a86c8"/></radialGradient></defs><circle cx="12.4" cy="6.8" r="5.6" fill="url(#glb)"/><path d="M9.6 3.6Q11.6 2.4 13 4Q12 6 10 5.6ZM13.6 7Q16 6.4 16.6 8.6Q15 10.6 13.4 9.4Z" fill="#4a9ad8" opacity="0.8"/><rect x="1.6" y="8.2" width="10.6" height="7.4" fill="#43aaee" stroke="#2a86cc" stroke-width="0.9"/><path d="M2 8.6H8L4 15.2H2Z" fill="#7cc8f6" opacity="0.7"/><rect x="5.8" y="16" width="2.4" height="1" fill="#8a98a4"/><rect x="3.8" y="17" width="6.4" height="1" fill="#a2aeb8"/></svg>
<svg width="0" height="0" style="left:0;top:0"><defs><symbol id="thumb" overflow="visible"><defs><linearGradient id="tv1" x1="0" x2="1" y1="0" y2="0"><stop offset="0.38" stop-color="#000" stop-opacity="0"/><stop offset="0.7" stop-color="#0a0a00" stop-opacity="0.3"/><stop offset="0.9" stop-color="#080800" stop-opacity="0.62"/><stop offset="1" stop-color="#050500" stop-opacity="0.88"/></linearGradient><radialGradient id="tv2" cx="0.45" cy="0.45" r="0.78"><stop offset="0.5" stop-color="#000" stop-opacity="0"/><stop offset="1" stop-color="#000" stop-opacity="0.8"/></radialGradient><linearGradient id="tsg" x1="0" x2="1" y1="0" y2="0"><stop offset="0" stop-color="#ecdc02"/><stop offset="0.6" stop-color="#e2d000"/><stop offset="1" stop-color="#c9b800"/></linearGradient><linearGradient id="tv3" x1="0.3" x2="1" y1="0.55" y2="1"><stop offset="0.35" stop-color="#1a1a08" stop-opacity="0"/><stop offset="1" stop-color="#1a1a08" stop-opacity="0.6"/></linearGradient><linearGradient id="tv4" x1="0" x2="1" y1="0" y2="0"><stop offset="0" stop-color="#141000" stop-opacity="0.08"/><stop offset="0.5" stop-color="#141000" stop-opacity="0.22"/><stop offset="1" stop-color="#141000" stop-opacity="0.5"/></linearGradient><clipPath id="tcl"><rect width="90" height="67"/></clipPath><filter id="tbl" x="-5%" y="-5%" width="110%" height="110%"><feGaussianBlur stdDeviation="0.55"/></filter></defs><rect x="1" y="1.5" width="90" height="67" fill="#7f9bb5" opacity="0.55"/><g clip-path="url(#tcl)"><g filter="url(#tbl)"><rect x="-2" y="-2" width="94" height="71" fill="#d3d3c5"/><g fill="#8e8e8c"><rect x="24.6" y="47.4" width="5.2" height="5.4"/><rect x="24.0" y="56" width="5.2" height="5"/><rect x="32.7" y="47.4" width="4" height="5.4"/><rect x="32.1" y="56" width="4" height="5"/><rect x="40.8" y="47.4" width="5.2" height="5.4"/><rect x="40.199999999999996" y="56" width="5.2" height="5"/><rect x="48.9" y="47.4" width="5.2" height="5.4"/><rect x="48.3" y="56" width="5.2" height="5"/><rect x="56.5" y="47.4" width="5.2" height="5.4"/><rect x="55.9" y="56" width="5.2" height="5"/><rect x="64.6" y="47.4" width="4.8" height="5.4"/><rect x="63.99999999999999" y="56" width="4.8" height="5"/><rect x="72.2" y="47.4" width="4.8" height="5.4"/><rect x="71.60000000000001" y="56" width="4.8" height="5"/><rect x="79.8" y="47.4" width="4.8" height="5.4"/><rect x="79.2" y="56" width="4.8" height="5"/><rect x="28" y="3" width="3.8" height="4.4"/><rect x="26.5" y="24.6" width="3.8" height="5.2"/><rect x="26.5" y="31.7" width="3.8" height="4.4"/><rect x="26.5" y="38.9" width="3.8" height="3.8"/></g><rect x="56.2" y="47" width="6" height="6.2" rx="1.5" fill="#2a2a26"/><rect x="57.8" y="48.6" width="2.8" height="3" fill="#e8e8e0"/><path d="M22 60.5L86 61.2V62L22 61.6Z" fill="#3a382c"/><rect x="24.8" y="61.5" width="1.2" height="1.4" fill="#b8541a"/><rect x="61.8" y="62.6" width="1" height="1.2" fill="#b8541a"/><path d="M20 65.6H48V67H20Z" fill="#c2a04a" opacity="0.7"/><path d="M22.5 13.2L92 15.5V19L22.5 17.2Z" fill="#15150e"/><rect x="26.5" y="10.2" width="1.4" height="1.6" fill="#222"/><rect x="25.6" y="18.4" width="1.6" height="1.8" fill="#333"/><path d="M31.7 -1H92V14L62 15.5L45 12.2L32 9.4Z" fill="url(#tsg)"/><path d="M39.5 -1L36.5 10.4L38.4 10.8L41.6 -1Z" fill="#f2ea3a"/><g fill="#5a5008" opacity="0.85"><path d="M41 0.5H44.5L44 4.5H41.5Z"/><path d="M50 0H52.8L52.4 7.5H50.4Z"/><path d="M56.6 0H58L57.6 8H56.6Z"/><path d="M71 0H73.4L73 9H71.2Z"/><path d="M76 2H78L77.6 9.5H76.2Z"/></g><path d="M59.5 0.5L69 4.8L60.5 7.2Z" fill="none" stroke="#4a4206" stroke-width="0.8"/><path d="M34 13.6L60 14.8L80 14.4L92 16V20L60 18.2L34 17.2Z" fill="#6a6200" opacity="0.75"/><path d="M33 15.4L48 13.8L62 15L48 17.4Z" fill="#d8c800" opacity="0.9"/><path d="M30.8 19.9L82 18.8L85.8 40.6L55 43.8L31.4 46.2Z" fill="url(#tsg)"/><path d="M55 43.8L85.8 40.6L86.4 42.2L55.4 45Z" fill="#8a7e10"/><path d="M35 19.8L37 19.8L38.4 46L36.2 46.2Z" fill="#f3ec55" opacity="0.9"/><g fill="#2e2a04" opacity="0.72"><path d="M40.2 25.6L43.4 25.2L43.2 37.6L40.4 37.2Z"/><rect x="45.4" y="28.6" width="1.4" height="1.4"/><rect x="45.4" y="31.4" width="1.4" height="3"/><path d="M49.6 23.2L51.8 23L53.6 39.6L51.4 39.8Z"/><path d="M70.4 21.4L72.6 21.6L72.4 28L70.8 27.8Z"/><path d="M71.6 31L73.6 31L75.4 39.4L73.4 39.4Z"/><path d="M75.6 25.8L77.4 25.6L79 36L77.4 36.2Z"/><path d="M82.4 27.6L83.6 27.6L84.4 34L83.2 34Z" opacity="0.7"/></g><path d="M56.2 24.2L68.8 29.9L57.6 37.8Z" fill="none" stroke="#2a2604" stroke-width="0.9" opacity="0.8"/><path d="M59 28.6L62 30.2L60 33.4L61.6 34" fill="none" stroke="#2a2604" stroke-width="1.1"/><path d="M-2 -2H23.8L22.4 14L22.2 20L19.8 50L18 69H-2Z" fill="#0a0b06"/><g fill="#1c1f0e" opacity="0.8"><rect x="5" y="11" width="3" height="2"/><rect x="10" y="20" width="2.4" height="3"/><rect x="3" y="27" width="2" height="2"/><rect x="9" y="37" width="2" height="3"/><rect x="4" y="47" width="3" height="2"/><rect x="12" y="6" width="2" height="3"/><rect x="7" y="55" width="2" height="2"/></g><path d="M17.4 43.4L31 43L31 45.6L17.6 46.2Z" fill="#f4f4f2"/><path d="M36.1 45.4L39 45L38.6 64.4L37 64.8Z" fill="#e2701c"/></g><rect x="30" y="0" width="60" height="18" fill="url(#tv4)"/><rect x="18" y="40" width="72" height="27" fill="url(#tv3)"/><rect width="90" height="67" fill="url(#tv1)"/><rect width="90" height="67" fill="url(#tv2)"/></g></symbol></defs></svg>
<div style="left:507px;top:289px;width:769px;height:359px;overflow:hidden">
<div style="left:15px;top:6px;width:105px;height:161px;background:#cce8ff;box-shadow:inset 0 0 0 1px #99d1ff;"></div>
<svg style="left:19px;top:31px;overflow:visible" width="98" height="74"><use href="#thumb" x="2" y="2"/></svg>
<div style="left:122px;top:6px;width:105px;height:161px;background:#cce8ff;"></div>
<svg style="left:126px;top:31px;overflow:visible" width="98" height="74"><use href="#thumb" x="2" y="2"/></svg>
<div style="left:229px;top:6px;width:105px;height:161px;background:#cce8ff;"></div>
<svg style="left:233px;top:31px;overflow:visible" width="98" height="74"><use href="#thumb" x="2" y="2"/></svg>
<div style="left:336px;top:6px;width:105px;height:161px;background:#cce8ff;"></div>
<svg style="left:340px;top:31px;overflow:visible" width="98" height="74"><use href="#thumb" x="2" y="2"/></svg>
<div style="left:443px;top:6px;width:105px;height:161px;background:#cce8ff;"></div>
<svg style="left:447px;top:31px;overflow:visible" width="98" height="74"><use href="#thumb" x="2" y="2"/></svg>
<div style="left:550px;top:6px;width:105px;height:161px;background:#cce8ff;"></div>
<svg style="left:554px;top:31px;overflow:visible" width="98" height="74"><use href="#thumb" x="2" y="2"/></svg>
<div style="left:657px;top:6px;width:105px;height:161px;background:#cce8ff;"></div>
<svg style="left:661px;top:31px;overflow:visible" width="98" height="74"><use href="#thumb" x="2" y="2"/></svg>
<div style="left:15px;top:168px;width:105px;height:161px;background:#cce8ff;"></div>
<svg style="left:19px;top:193px;overflow:visible" width="98" height="74"><use href="#thumb" x="2" y="2"/></svg>
<div style="left:122px;top:168px;width:105px;height:161px;background:#cce8ff;"></div>
<svg style="left:126px;top:193px;overflow:visible" width="98" height="74"><use href="#thumb" x="2" y="2"/></svg>
<div style="left:229px;top:168px;width:105px;height:161px;background:#cce8ff;"></div>
<svg style="left:233px;top:193px;overflow:visible" width="98" height="74"><use href="#thumb" x="2" y="2"/></svg>
<div style="left:336px;top:168px;width:105px;height:161px;background:#cce8ff;"></div>
<svg style="left:340px;top:193px;overflow:visible" width="98" height="74"><use href="#thumb" x="2" y="2"/></svg>
<div style="left:443px;top:168px;width:105px;height:161px;background:#cce8ff;"></div>
<svg style="left:447px;top:193px;overflow:visible" width="98" height="74"><use href="#thumb" x="2" y="2"/></svg>
<div style="left:550px;top:168px;width:105px;height:161px;background:#cce8ff;"></div>
<svg style="left:554px;top:193px;overflow:visible" width="98" height="74"><use href="#thumb" x="2" y="2"/></svg>
<div style="left:657px;top:168px;width:105px;height:161px;background:#cce8ff;"></div>
<svg style="left:661px;top:193px;overflow:visible" width="98" height="74"><use href="#thumb" x="2" y="2"/></svg>
<div style="left:15px;top:330px;width:105px;height:161px;background:#cce8ff;"></div>
<svg style="left:19px;top:355px;overflow:visible" width="98" height="74"><use href="#thumb" x="2" y="2"/></svg>
</div>
<span id="t57" style="left:529.5px;top:393.84px;font:400 12px/14px 'Liberation Sans',sans-serif;color:#000;transform:scaleX(0.8990);transform-origin:0 0;">202502041315586</span>
<span id="t58" style="left:532.0px;top:408.84px;font:400 12px/14px 'Liberation Sans',sans-serif;color:#000;transform:scaleX(0.9219);transform-origin:0 0;">53@SUBC-NC-S</span>
<span id="t59" style="left:530.0px;top:423.84px;font:400 12px/14px 'Liberation Sans',sans-serif;color:#000;transform:scaleX(0.9223);transform-origin:0 0;">UPORT2 Channel</span>
<span id="t60" style="left:559.0px;top:438.84px;font:400 12px/14px 'Liberation Sans',sans-serif;color:#000;transform:scaleX(0.9479);transform-origin:0 0;">1.jpeg</span>
<span id="t61" style="left:636.5px;top:393.84px;font:400 12px/14px 'Liberation Sans',sans-serif;color:#000;transform:scaleX(0.8990);transform-origin:0 0;">202502041316032</span>
<span id="t62" style="left:639.0px;top:408.84px;font:400 12px/14px 'Liberation Sans',sans-serif;color:#000;transform:scaleX(0.9219);transform-origin:0 0;">47@SUBC-NC-S</span>
<span id="t63" style="left:637.0px;top:423.84px;font:400 12px/14px 'Liberation Sans',sans-serif;color:#000;transform:scaleX(0.9223);transform-origin:0 0;">UPORT2 Channel</span>
<span id="t64" style="left:666.0px;top:438.84px;font:400 12px/14px 'Liberation Sans',sans-serif;color:#000;transform:scaleX(0.9479);transform-origin:0 0;">1.jpeg</span>
<span id="t65" style="left:743.5px;top:393.84px;font:400 12px/14px 'Liberation Sans',sans-serif;color:#000;transform:scaleX(0.8990);transform-origin:0 0;">202502041316079</span>
<span id="t66" style="left:746.0px;top:408.84px;font:400 12px/14px 'Liberation Sans',sans-serif;color:#000;transform:scaleX(0.9219);transform-origin:0 0;">04@SUBC-NC-S</span>
<span id="t67" style="left:744.0px;top:423.84px;font:400 12px/14px 'Liberation Sans',sans-serif;color:#000;transform:scaleX(0.9223);transform-origin:0 0;">UPORT2 Channel</span>
<span id="t68" style="left:773.0px;top:438.84px;font:400 12px/14px 'Liberation Sans',sans-serif;color:#000;transform:scaleX(0.9479);transform-origin:0 0;">1.jpeg</span>
<span id="t69" style="left:850.5px;top:393.84px;font:400 12px/14px 'Liberation Sans',sans-serif;color:#000;transform:scaleX(0.8990);transform-origin:0 0;">202502041316120</span>
<span id="t70" style="left:853.0px;top:408.84px;font:400 12px/14px 'Liberation Sans',sans-serif;color:#000;transform:scaleX(0.9219);transform-origin:0 0;">45@SUBC-NC-S</span>
<span id="t71" style="left:851.0px;top:423.84px;font:400 12px/14px 'Liberation Sans',sans-serif;color:#000;transform:scaleX(0.9223);transform-origin:0 0;">UPORT2 Channel</span>
<span id="t72" style="left:880.0px;top:438.84px;font:400 12px/14px 'Liberation Sans',sans-serif;color:#000;transform:scaleX(0.9479);transform-origin:0 0;">1.jpeg</span>
<span id="t73" style="left:957.5px;top:393.84px;font:400 12px/14px 'Liberation Sans',sans-serif;color:#000;transform:scaleX(0.8990);transform-origin:0 0;">202502041316198</span>
<span id="t74" style="left:960.0px;top:408.84px;font:400 12px/14px 'Liberation Sans',sans-serif;color:#000;transform:scaleX(0.9219);transform-origin:0 0;">35@SUBC-NC-S</span>
<span id="t75" style="left:958.0px;top:423.84px;font:400 12px/14px 'Liberation Sans',sans-serif;color:#000;transform:scaleX(0.9223);transform-origin:0 0;">UPORT2 Channel</span>
<span id="t76" style="left:987.0px;top:438.84px;font:400 12px/14px 'Liberation Sans',sans-serif;color:#000;transform:scaleX(0.9479);transform-origin:0 0;">1.jpeg</span>
<span id="t77" style="left:1064.5px;top:393.84px;font:400 12px/14px 'Liberation Sans',sans-serif;color:#000;transform:scaleX(0.8990);transform-origin:0 0;">202502041316255</span>
<span id="t78" style="left:1067.0px;top:408.84px;font:400 12px/14px 'Liberation Sans',sans-serif;color:#000;transform:scaleX(0.9219);transform-origin:0 0;">87@SUBC-NC-S</span>
<span id="t79" style="left:1065.0px;top:423.84px;font:400 12px/14px 'Liberation Sans',sans-serif;color:#000;transform:scaleX(0.9223);transform-origin:0 0;">UPORT2 Channel</span>
<span id="t80" style="left:1094.0px;top:438.84px;font:400 12px/14px 'Liberation Sans',sans-serif;color:#000;transform:scaleX(0.9479);transform-origin:0 0;">1.jpeg</span>
<span id="t81" style="left:1171.5px;top:393.84px;font:400 12px/14px 'Liberation Sans',sans-serif;color:#000;transform:scaleX(0.8990);transform-origin:0 0;">202502041316308</span>
<span id="t82" style="left:1174.0px;top:408.84px;font:400 12px/14px 'Liberation Sans',sans-serif;color:#000;transform:scaleX(0.9219);transform-origin:0 0;">59@SUBC-NC-S</span>
<span id="t83" style="left:1172.0px;top:423.84px;font:400 12px/14px 'Liberation Sans',sans-serif;color:#000;transform:scaleX(0.9223);transform-origin:0 0;">UPORT2 Channel</span>
<span id="t84" style="left:1201.0px;top:438.84px;font:400 12px/14px 'Liberation Sans',sans-serif;color:#000;transform:scaleX(0.9479);transform-origin:0 0;">1.jpeg</span>
<span id="t85" style="left:529.5px;top:555.84px;font:400 12px/14px 'Liberation Sans',sans-serif;color:#000;transform:scaleX(0.8990);transform-origin:0 0;">202502041316356</span>
<span id="t86" style="left:532.0px;top:570.84px;font:400 12px/14px 'Liberation Sans',sans-serif;color:#000;transform:scaleX(0.9219);transform-origin:0 0;">21@SUBC-NC-S</span>
<span id="t87" style="left:530.0px;top:585.84px;font:400 12px/14px 'Liberation Sans',sans-serif;color:#000;transform:scaleX(0.9223);transform-origin:0 0;">UPORT2 Channel</span>
<span id="t88" style="left:559.0px;top:600.84px;font:400 12px/14px 'Liberation Sans',sans-serif;color:#000;transform:scaleX(0.9479);transform-origin:0 0;">1.jpeg</span>
<span id="t89" style="left:636.5px;top:555.84px;font:400 12px/14px 'Liberation Sans',sans-serif;color:#000;transform:scaleX(0.8990);transform-origin:0 0;">202502041316401</span>
<span id="t90" style="left:639.0px;top:570.84px;font:400 12px/14px 'Liberation Sans',sans-serif;color:#000;transform:scaleX(0.9219);transform-origin:0 0;">32@SUBC-NC-S</span>
<span id="t91" style="left:637.0px;top:585.84px;font:400 12px/14px 'Liberation Sans',sans-serif;color:#000;transform:scaleX(0.9223);transform-origin:0 0;">UPORT2 Channel</span>
<span id="t92" style="left:666.0px;top:600.84px;font:400 12px/14px 'Liberation Sans',sans-serif;color:#000;transform:scaleX(0.9479);transform-origin:0 0;">1.jpeg</span>
<span id="t93" style="left:743.5px;top:555.84px;font:400 12px/14px 'Liberation Sans',sans-serif;color:#000;transform:scaleX(0.8990);transform-origin:0 0;">202502041316446</span>
<span id="t94" style="left:746.0px;top:570.84px;font:400 12px/14px 'Liberation Sans',sans-serif;color:#000;transform:scaleX(0.9219);transform-origin:0 0;">38@SUBC-NC-S</span>
<span id="t95" style="left:744.0px;top:585.84px;font:400 12px/14px 'Liberation Sans',sans-serif;color:#000;transform:scaleX(0.9223);transform-origin:0 0;">UPORT2 Channel</span>
<span id="t96" style="left:773.0px;top:600.84px;font:400 12px/14px 'Liberation Sans',sans-serif;color:#000;transform:scaleX(0.9479);transform-origin:0 0;">1.jpeg</span>
<span id="t97" style="left:850.5px;top:555.84px;font:400 12px/14px 'Liberation Sans',sans-serif;color:#000;transform:scaleX(0.8990);transform-origin:0 0;">202502041316486</span>
<span id="t98" style="left:853.0px;top:570.84px;font:400 12px/14px 'Liberation Sans',sans-serif;color:#000;transform:scaleX(0.9219);transform-origin:0 0;">69@SUBC-NC-S</span>
<span id="t99" style="left:851.0px;top:585.84px;font:400 12px/14px 'Liberation Sans',sans-serif;color:#000;transform:scaleX(0.9223);transform-origin:0 0;">UPORT2 Channel</span>
<span id="t100" style="left:880.0px;top:600.84px;font:400 12px/14px 'Liberation Sans',sans-serif;color:#000;transform:scaleX(0.9479);transform-origin:0 0;">1.jpeg</span>
<span id="t101" style="left:957.5px;top:555.84px;font:400 12px/14px 'Liberation Sans',sans-serif;color:#000;transform:scaleX(0.8990);transform-origin:0 0;">202502041316524</span>
<span id="t102" style="left:960.0px;top:570.84px;font:400 12px/14px 'Liberation Sans',sans-serif;color:#000;transform:scaleX(0.9219);transform-origin:0 0;">28@SUBC-NC-S</span>
<span id="t103" style="left:958.0px;top:585.84px;font:400 12px/14px 'Liberation Sans',sans-serif;color:#000;transform:scaleX(0.9223);transform-origin:0 0;">UPORT2 Channel</span>
<span id="t104" style="left:987.0px;top:600.84px;font:400 12px/14px 'Liberation Sans',sans-serif;color:#000;transform:scaleX(0.9479);transform-origin:0 0;">1.jpeg</span>
<span id="t105" style="left:1064.5px;top:555.84px;font:400 12px/14px 'Liberation Sans',sans-serif;color:#000;transform:scaleX(0.8990);transform-origin:0 0;">202502041316558</span>
<span id="t106" style="left:1067.0px;top:570.84px;font:400 12px/14px 'Liberation Sans',sans-serif;color:#000;transform:scaleX(0.9219);transform-origin:0 0;">84@SUBC-NC-S</span>
<span id="t107" style="left:1065.0px;top:585.84px;font:400 12px/14px 'Liberation Sans',sans-serif;color:#000;transform:scaleX(0.9223);transform-origin:0 0;">UPORT2 Channel</span>
<span id="t108" style="left:1094.0px;top:600.84px;font:400 12px/14px 'Liberation Sans',sans-serif;color:#000;transform:scaleX(0.9479);transform-origin:0 0;">1.jpeg</span>
<span id="t109" style="left:1171.5px;top:555.84px;font:400 12px/14px 'Liberation Sans',sans-serif;color:#000;transform:scaleX(0.8990);transform-origin:0 0;">202502041316593</span>
<span id="t110" style="left:1174.0px;top:570.84px;font:400 12px/14px 'Liberation Sans',sans-serif;color:#000;transform:scaleX(0.9219);transform-origin:0 0;">08@SUBC-NC-S</span>
<span id="t111" style="left:1172.0px;top:585.84px;font:400 12px/14px 'Liberation Sans',sans-serif;color:#000;transform:scaleX(0.9223);transform-origin:0 0;">UPORT2 Channel</span>
<span id="t112" style="left:1201.0px;top:600.84px;font:400 12px/14px 'Liberation Sans',sans-serif;color:#000;transform:scaleX(0.9479);transform-origin:0 0;">1.jpeg</span>
<div style="left:1276px;top:289px;width:16px;height:359px;background:#f0f0f0;"></div>
<div style="left:1276px;top:306px;width:15px;height:240px;background:#cdcdcd;"></div>
<div style="left:1291px;top:289px;width:1px;height:359px;background:#fafafa;"></div>
<svg style="left:1276px;top:289px" width="16" height="359" fill="none" stroke="#505050" stroke-width="2"><path d="M4.4 10.8L7.5 7.4L10.6 10.8"/><path d="M4.4 349.2L7.5 352.6L10.6 349.2"/></svg>
<div style="left:348px;top:648px;width:944px;height:76px;background:#f0f0f0;"></div>
<div style="left:348px;top:648px;width:1px;height:76px;background:#fbfbfb;"></div>
<div style="left:348px;top:723px;width:944px;height:1px;background:#fbfbfb;"></div>
<div style="left:1291px;top:648px;width:1px;height:76px;background:#fbfbfb;"></div>
<span id="t113" style="left:478px;top:661.84px;font:400 12px/14px 'Liberation Sans',sans-serif;color:#000;transform:scaleX(0.9459);transform-origin:0 0;">File name:</span>
<div style="left:537px;top:657px;width:538px;height:23px;border:1px solid #7a7a7a;box-sizing:border-box;background:#fff"></div>
<span id="t114" style="left:541px;top:661.84px;font:400 12px/14px 'Liberation Sans',sans-serif;color:#000;transform:scaleX(0.9220);transform-origin:0 0;">"20250204131558653@SUBC-NC-SUPORT2 Channel 1.jpeg" "20250204131603247@SUBC-NC-SUPC</span>
<svg style="left:1060px;top:664px" width="12" height="8" fill="none" stroke="#444" stroke-width="1.1"><path d="M1.5 1.5L6 6L10.5 1.5"/></svg>
<div style="left:1087px;top:657px;width:188px;height:23px;border:1px solid #adadad;box-sizing:border-box;background:#e1e1e1"></div>
<span id="t115" style="left:1091px;top:661.84px;font:400 12px/14px 'Liberation Sans',sans-serif;color:#000;transform:scaleX(0.9480);transform-origin:0 0;">All Files (*)</span>
<svg style="left:1260px;top:664px" width="12" height="8" fill="none" stroke="#444" stroke-width="1.1"><path d="M1.5 1.5L6 6L10.5 1.5"/></svg>
<div style="left:1088px;top:687px;width:86px;height:24px;border:2px solid #0078d7;box-sizing:border-box;background:#e1e1e1"></div>
<span id="t116" style="left:1116.5px;top:691.84px;font:400 12px/14px 'Liberation Sans',sans-serif;color:#000;transform:scaleX(0.9707);transform-origin:0 0;">Open</span>
<div style="left:1188px;top:687px;width:86px;height:24px;border:1px solid #adadad;box-sizing:border-box;background:#e1e1e1"></div>
<span id="t117" style="left:1213px;top:691.84px;font:400 12px/14px 'Liberation Sans',sans-serif;color:#000;transform:scaleX(0.9636);transform-origin:0 0;">Cancel</span>
<svg style="left:1281px;top:713px" width="10" height="10" fill="#b8b8b8"><rect x="8" y="0" width="1.5" height="1.5"/><rect x="4" y="4" width="1.5" height="1.5"/><rect x="8" y="4" width="1.5" height="1.5"/><rect x="0" y="8" width="1.5" height="1.5"/><rect x="4" y="8" width="1.5" height="1.5"/><rect x="8" y="8" width="1.5" height="1.5"/></svg>
</body></html>
